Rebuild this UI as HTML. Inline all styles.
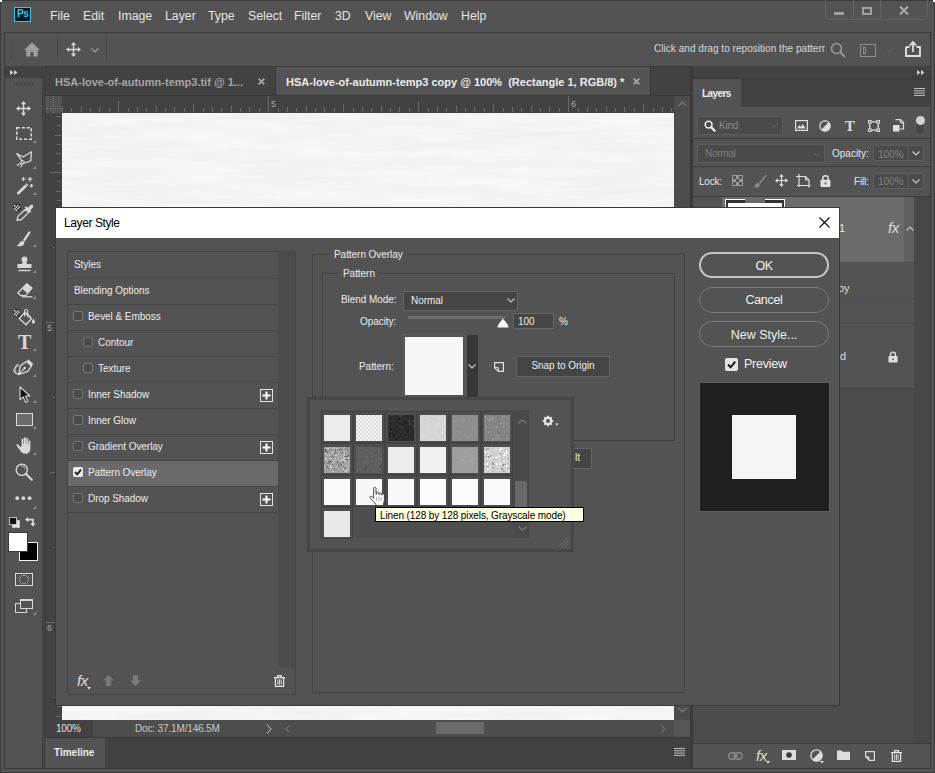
<!DOCTYPE html>
<html lang="en">
<head>
<meta charset="utf-8">
<title>Layer Style</title>
<style>
*{box-sizing:border-box;margin:0;padding:0}
html,body{width:935px;height:773px;overflow:hidden;background:#323232}
body{position:relative;font-family:"Liberation Sans",sans-serif;font-size:12px;color:#dcdcdc}
.a{position:absolute}
.t{position:absolute;white-space:nowrap;line-height:1;font-size:12px}
.b{font-weight:bold}
svg{position:absolute;overflow:visible}
.m{top:10px;font-size:12.3px;color:#e4e4e4}
.d{font-size:10px;color:#ececec;letter-spacing:-0.05px}
.btn{left:699px;width:130px;height:26px;border:1px solid #7a7a7a;border-radius:13px}
</style>
</head>
<body>
<!-- APP FRAME -->
<div class="a" id="frame" style="left:0;top:0;width:935px;height:773px;background:#535353;border:1px solid #3c3c3c;border-radius:3px 3px 0 0"></div>
<div class="a" style="left:0;top:0;width:2px;height:2px;background:#fff"></div>
<div class="a" style="left:933px;top:0;width:2px;height:2px;background:#fff"></div>
<div class="a" id="inner" style="left:4px;top:32px;width:927px;height:737px;background:#535353;border:1px solid #3a3a3a"></div>
<!-- MENU BAR -->
<div class="a" style="left:14px;top:7px;width:17px;height:15px;background:#001d26;border:1px solid #31c5f0"></div>
<div class="t b" style="left:17px;top:9px;font-size:10px;color:#31c5f0;letter-spacing:-0.3px">Ps</div>
<div class="t m" style="left:50px">File</div>
<div class="t m" style="left:83px">Edit</div>
<div class="t m" style="left:118px">Image</div>
<div class="t m" style="left:165px">Layer</div>
<div class="t m" style="left:208px">Type</div>
<div class="t m" style="left:248px">Select</div>
<div class="t m" style="left:294px">Filter</div>
<div class="t m" style="left:335px">3D</div>
<div class="t m" style="left:365px">View</div>
<div class="t m" style="left:404px">Window</div>
<div class="t m" style="left:461px">Help</div>
<!-- window controls -->
<div class="a" style="left:825px;top:-3px;width:103px;height:23px;border:1px solid #636363;border-radius:0 0 4px 4px"></div>
<div class="a" style="left:853px;top:0;width:1px;height:19px;background:#636363"></div>
<div class="a" style="left:880px;top:0;width:1px;height:19px;background:#636363"></div>
<div class="a" style="left:834px;top:12px;width:10px;height:3px;background:#a0a0a0"></div>
<div class="a" style="left:862px;top:7px;width:10px;height:8px;border:2px solid #a0a0a0"></div>
<svg style="left:899px;top:6px" width="10" height="9" viewBox="0 0 10 9"><path d="M1 0.5L9 8.5M9 0.5L1 8.5" stroke="#a8a8a8" stroke-width="2.2" fill="none"/></svg>
<!-- OPTIONS BAR -->
<div class="a" style="left:4px;top:32px;width:927px;height:1px;background:#383838"></div>
<div class="a" style="left:9px;top:40px;width:3px;height:20px;background:repeating-linear-gradient(#484848 0 1px,#535353 1px 2px)"></div>
<svg style="left:24px;top:42px" width="16" height="15" viewBox="0 0 16 15"><path d="M8 0.5L0 8h2.2v6.5h4.3v-4.5h3v4.5h4.3V8H16z" fill="#9d9d9d"/></svg>
<div class="a" style="left:57px;top:37px;width:1px;height:24px;background:#484848"></div>
<svg style="left:66px;top:42px" width="15" height="15" viewBox="0 0 15 15"><path d="M7.5 0l2.6 3.2H8.2v3.6h3.6V4.9L15 7.5l-3.2 2.6V8.2H8.2v3.6h1.9L7.5 15l-2.6-3.2h1.9V8.2H3.2v1.9L0 7.5l3.2-2.6v1.9h3.6V3.2H4.9z" fill="#d6d6d6"/></svg>
<svg style="left:91px;top:48px" width="8" height="5" viewBox="0 0 8 5"><path d="M0.5 0.5L4 4l3.5-3.5" stroke="#a0a0a0" stroke-width="1.2" fill="none"/></svg>
<div class="a" style="left:106px;top:37px;width:1px;height:24px;background:#484848"></div>
<div class="t" style="left:654px;top:44px;font-size:10.1px;color:#d8d8d8;width:171px;overflow:hidden">Click and drag to reposition the pattern</div>
<svg style="left:830px;top:42px" width="16" height="16" viewBox="0 0 16 16"><circle cx="6.5" cy="6.5" r="5" stroke="#9a9a9a" stroke-width="1.5" fill="none"/><path d="M10.2 10.2L15 15" stroke="#9a9a9a" stroke-width="1.8"/></svg>
<div class="a" style="left:860px;top:44px;width:16px;height:13px;border:1px solid #8e8e8e"></div>
<div class="a" style="left:863px;top:47px;width:3px;height:7px;border:1px solid #8e8e8e"></div>
<svg style="left:885px;top:48px" width="8" height="5" viewBox="0 0 8 5"><path d="M0.5 0.5L4 4l3.5-3.5" stroke="#606060" stroke-width="1.2" fill="none"/></svg>
<svg style="left:905px;top:41px" width="16" height="16" viewBox="0 0 16 16"><path d="M1 6h3.5M11.5 6H15v9H1V6" stroke="#e0e0e0" stroke-width="1.8" fill="none"/><path d="M8 11V2M4.8 4.6L8 1l3.2 3.6" stroke="#e0e0e0" stroke-width="1.8" fill="none"/></svg>
<!-- TOOLBAR -->
<div class="a" id="toolbar" style="left:5px;top:66px;width:37px;height:702px;background:#535353"></div>
<div class="a" style="left:5px;top:66px;width:37px;height:12px;background:#424242"></div>
<div class="a" style="left:42px;top:66px;width:3px;height:702px;background:#3a3a3a"></div>
<div class="a" style="left:43px;top:66px;width:1px;height:702px;background:#4a4a4a"></div>
<svg style="left:10px;top:70px" width="8" height="5" viewBox="0 0 8 5"><path d="M0 0l3.5 2.5L0 5zM4 0l3.5 2.5L4 5z" fill="#d0d0d0"/></svg>
<div class="a" style="left:14px;top:82px;width:20px;height:4px;background:repeating-linear-gradient(90deg,#454545 0 1px,#535353 1px 2px)"></div>
<svg style="left:16px;top:101px" width="15" height="15" viewBox="0 0 15 15"><path d="M7.5 0l2.6 3.2H8.2v3.6h3.6V4.9L15 7.5l-3.2 2.6V8.2H8.2v3.6h1.9L7.5 15l-2.6-3.2h1.9V8.2H3.2v1.9L0 7.5l3.2-2.6v1.9h3.6V3.2H4.9z" fill="#d8d8d8"/></svg>
<svg style="left:16px;top:127px" width="16" height="13" viewBox="0 0 16 13"><rect x="0.75" y="0.75" width="14.5" height="11.5" fill="none" stroke="#d8d8d8" stroke-width="1.5" stroke-dasharray="3.2 1.8"/></svg>
<svg style="left:33px;top:140px" width="3" height="3" viewBox="0 0 3 3"><path d="M3 0v3H0z" fill="#9a9a9a"/></svg>
<svg style="left:16px;top:151px" width="17" height="17" viewBox="0 0 17 17"><path d="M0.8 2.6L7 6 15.5 0.8 14.8 9.8 8.6 12 6.2 10.4z" fill="none" stroke="#d8d8d8" stroke-width="1.3" stroke-linejoin="round"/><circle cx="6.6" cy="11.2" r="1.5" fill="#535353" stroke="#d8d8d8" stroke-width="1.1"/><path d="M5.4 12L0.8 14.4M6.8 12.8L4.4 16.2" stroke="#d8d8d8" stroke-width="1.2" fill="none"/></svg>
<svg style="left:33px;top:166px" width="3" height="3" viewBox="0 0 3 3"><path d="M3 0v3H0z" fill="#9a9a9a"/></svg>
<svg style="left:16px;top:177px" width="18" height="18" viewBox="0 0 18 18"><path d="M1.2 15.2L10.6 6.2l1.9 1.9L3.2 17.2c-1.2 1.1-3-0.8-2-2z" fill="#d8d8d8"/><path d="M9.4 7.2l1.9 1.9" stroke="#535353" stroke-width="0.9"/><path d="M7.5 0v4M5.5 2h4M14 0v4.4M11.8 2.2h4.4M15.5 7v3.6M13.7 8.8h3.6" stroke="#d8d8d8" stroke-width="1.2"/></svg>
<svg style="left:33px;top:192px" width="3" height="3" viewBox="0 0 3 3"><path d="M3 0v3H0z" fill="#9a9a9a"/></svg>
<svg style="left:13px;top:203px" width="21" height="18" viewBox="0 0 21 18"><circle cx="4" cy="4.6" r="3.6" fill="#222"/><path d="M1 2h1.5v1.5H1zM4 2h1.5v1.5H4zM2.5 3.500h1.5V5H2.500zM5.500 3.500H7V5H5.500zM1 5h1.500v1.500H1zM4 5h1.500v1.500H4zM2.500 6.500h1.500V8H2.500z" fill="#e8e8e8"/><path d="M1.2 1.6l1-1.200 1 1.200zM5 1.600l1-1.200 1 1.200z" fill="#222"/><path d="M12.800 6.200l3 3L9 16c-1 1-2.600 1.200-3.600 0.800l-1 0.600-0.400-0.600 0.700-0.800c-0.500-1.200-0.200-2.400 0.800-3.400z" fill="none" stroke="#d8d8d8" stroke-width="1.300"/><path d="M11.400 4.200l5.600 5.600 1.400-1.400-1.200-1.200 2.600-2.600c1.600-1.600-0.800-4-2.400-2.400L14.800 4.800 13.600 3.600z" fill="#d8d8d8"/></svg>
<svg style="left:16px;top:231px" width="15" height="16" viewBox="0 0 15 16"><path d="M14 0.300c0.800 0.500 0.300 1.800-0.300 2.800L8.800 10.600 6.800 9.200 12 1.400c0.600-0.900 1.400-1.500 2-1.100z" fill="#d8d8d8"/><path d="M6 10c1.200-0.300 2.600 0.800 2.400 2.200C8.100 14.400 5.400 15.800 0.400 15c1.600-0.600 2.200-1.600 2.800-2.800C3.800 11 4.800 10.300 6 10z" fill="#d8d8d8"/></svg>
<svg style="left:33px;top:244px" width="3" height="3" viewBox="0 0 3 3"><path d="M3 0v3H0z" fill="#9a9a9a"/></svg>
<svg style="left:17px;top:256px" width="15" height="16" viewBox="0 0 15 16"><path d="M7.500 0.500c1.800 0 3 1.300 3 2.900 0 1.300-1 2-1 3.200 0 1 0.600 1.500 1.600 1.500h3.400v4H0.500v-4h3.400c1 0 1.600-0.500 1.600-1.500 0-1.200-1-1.900-1-3.200 0-1.600 1.200-2.900 3-2.900z" fill="#d8d8d8"/><path d="M1.500 14.500h12" stroke="#d8d8d8" stroke-width="1.400"/></svg>
<svg style="left:33px;top:270px" width="3" height="3" viewBox="0 0 3 3"><path d="M3 0v3H0z" fill="#9a9a9a"/></svg>
<svg style="left:17px;top:283px" width="16" height="15" viewBox="0 0 16 15"><path d="M9.800 0.800L15 5 8.600 12.600H3.800L0.800 10z" fill="none" stroke="#d8d8d8" stroke-width="1.300" stroke-linejoin="round"/><path d="M9.800 0.800L15 5 10.600 10.200 5.400 6z" fill="#d8d8d8"/><path d="M5 13.800h10.500" stroke="#d8d8d8" stroke-width="1.300"/></svg>
<svg style="left:33px;top:296px" width="3" height="3" viewBox="0 0 3 3"><path d="M3 0v3H0z" fill="#9a9a9a"/></svg>
<svg style="left:13px;top:308px" width="23" height="18" viewBox="0 0 23 18"><circle cx="4" cy="4.600" r="3.600" fill="#222"/><path d="M1 2h1.500v1.500H1zM4 2h1.500v1.500H4zM2.500 3.500h1.500V5H2.500zM5.500 3.500H7V5H5.500zM1 5h1.500v1.500H1zM4 5h1.500v1.500H4zM2.500 6.500h1.500V8H2.500z" fill="#e8e8e8"/><path d="M1.200 1.600l1-1.200 1 1.200zM5 1.600l1-1.200 1 1.200z" fill="#222"/><path d="M11.500 4.600L18.400 10.800 13 16.800 6.200 10.600z" fill="none" stroke="#d8d8d8" stroke-width="1.300" stroke-linejoin="round"/><path d="M11.600 8.400V3c0-2 3-2 3 0.200v5.600" fill="none" stroke="#d8d8d8" stroke-width="1.200"/><path d="M11.500 4.600c3 0.600 6 3 6.900 6.200" fill="none" stroke="#d8d8d8" stroke-width="1"/><path d="M20.400 10.600c0.800 1.400 1.600 2.400 1.600 3.400a1.600 1.600 0 0 1-3.200 0c0-1 0.800-2 1.600-3.400z" fill="#d8d8d8"/></svg>
<div class="t b" style="left:18px;top:332px;font-size:20px;color:#d8d8d8;font-family:'Liberation Serif',serif">T</div>
<svg style="left:33px;top:348px" width="3" height="3" viewBox="0 0 3 3"><path d="M3 0v3H0z" fill="#9a9a9a"/></svg>
<svg style="left:13px;top:359px" width="21" height="16" viewBox="0 0 21 16"><path d="M13.600 2.400L15.700 0.500 20.300 5 18.400 7.200z" fill="#d8d8d8"/><path d="M5.500 15.600L7.600 6.500 13.600 2.400 18.400 7.200 14.800 12.400z" fill="none" stroke="#d8d8d8" stroke-width="1.300" stroke-linejoin="round"/><circle cx="11.700" cy="9.100" r="1.300" fill="#d8d8d8"/><path d="M11.700 9.100L5.800 15.300" stroke="#d8d8d8" stroke-width="1.100"/><path d="M4.500 6.400C2.500 7.500 1.400 9.500 1.400 11.400 1.600 13.200 3 14.600 4.800 15.200" fill="none" stroke="#d8d8d8" stroke-width="1.100"/><circle cx="4.500" cy="6.400" r="1.200" fill="#535353" stroke="#d8d8d8" stroke-width="1"/><circle cx="1.500" cy="11.400" r="1.200" fill="#535353" stroke="#d8d8d8" stroke-width="1"/></svg>
<svg style="left:33px;top:374px" width="3" height="3" viewBox="0 0 3 3"><path d="M3 0v3H0z" fill="#9a9a9a"/></svg>
<svg style="left:19px;top:386px" width="12" height="17" viewBox="0 0 12 17"><path d="M1 0.800V13.600l3.200-2.800 2.400 5.400 2.200-1-2.400-5.200h4.400z" fill="#111" stroke="#d8d8d8" stroke-width="1.100" stroke-linejoin="round"/></svg>
<svg style="left:33px;top:400px" width="3" height="3" viewBox="0 0 3 3"><path d="M3 0v3H0z" fill="#9a9a9a"/></svg>
<div class="a" style="left:16px;top:413px;width:17px;height:13px;background:#6c6c6c;border:1px solid #d8d8d8"></div>
<svg style="left:33px;top:426px" width="3" height="3" viewBox="0 0 3 3"><path d="M3 0v3H0z" fill="#9a9a9a"/></svg>
<svg style="left:16px;top:437px" width="17" height="17" viewBox="0 0 17 17"><path d="M5.600 8V2.400c0-1.300 1.800-1.300 1.800 0V7h0.500V1.200c0-1.300 1.900-1.300 1.900 0V7h0.500V2c0-1.300 1.800-1.300 1.800 0v5.600h0.500V4.400c0-1.300 1.800-1.300 1.800 0v6.800c0 3.400-2 5.600-5 5.600-2.600 0-3.800-1-5.200-3.200L0.600 8.800C0 7.600 1.400 6.800 2.400 7.800L4.400 10h0.600z" fill="#d8d8d8"/></svg>
<svg style="left:33px;top:452px" width="3" height="3" viewBox="0 0 3 3"><path d="M3 0v3H0z" fill="#9a9a9a"/></svg>
<svg style="left:15px;top:463px" width="18" height="18" viewBox="0 0 18 18"><circle cx="6.800" cy="6.800" r="5.600" fill="none" stroke="#d8d8d8" stroke-width="1.400"/><path d="M10.800 10.800L16.800 16.800" stroke="#d8d8d8" stroke-width="2" stroke-linecap="round"/><path d="M6.200 3.200c1.800-0.200 3.400 1 3.800 2.600" stroke="#d8d8d8" stroke-width="0.900" fill="none"/></svg>
<svg style="left:15px;top:496px" width="17" height="5" viewBox="0 0 17 5"><circle cx="2.200" cy="2.200" r="1.900" fill="#d8d8d8"/><circle cx="8.400" cy="2.200" r="1.900" fill="#d8d8d8"/><circle cx="14.600" cy="2.200" r="1.900" fill="#d8d8d8"/></svg>
<svg style="left:33px;top:506px" width="3" height="3" viewBox="0 0 3 3"><path d="M3 0v3H0z" fill="#9a9a9a"/></svg>
<div class="a" style="left:12px;top:520px;width:8px;height:8px;background:#e6e6e6;border:1px solid #bdbdbd"></div>
<div class="a" style="left:9px;top:517px;width:8px;height:8px;background:#111;border:1px solid #bdbdbd"></div>
<svg style="left:25px;top:517px" width="12" height="10" viewBox="0 0 12 10"><path d="M0 2.600L3.200 0v1.800h5.600v4.400h1.800L8 9.800 5.200 6.200h1.900V3.500H3.200v1.700z" fill="#d8d8d8"/></svg>
<div class="a" style="left:19px;top:542px;width:19px;height:19px;background:#000;border:1px solid #f0f0f0"></div>
<div class="a" style="left:8px;top:532px;width:20px;height:20px;background:#fff;border:1px solid #3a3a3a"></div>
<div class="a" style="left:15px;top:573px;width:18px;height:13px;border:1px solid #d8d8d8"></div>
<div class="a" style="left:19px;top:575px;width:10px;height:9px;border:1.500px dotted #d8d8d8;border-radius:50%"></div>
<div class="a" style="left:15px;top:603px;width:12px;height:10px;border:1px solid #d8d8d8"></div>
<div class="a" style="left:20px;top:599px;width:13px;height:10px;background:#535353;border:1px solid #d8d8d8;border-top-width:2px"></div>
<svg style="left:33px;top:612px" width="3" height="3" viewBox="0 0 3 3"><path d="M3 0v3H0z" fill="#9a9a9a"/></svg>
<!-- DOC WINDOW -->
<div class="a" id="doc" style="left:45px;top:66px;width:645px;height:672px;background:#424242"></div>
<div class="a" style="left:45px;top:66px;width:645px;height:1px;background:#383838"></div>
<div class="a" style="left:45px;top:95px;width:645px;height:1px;background:#383838"></div>
<div class="a" id="tab2" style="left:276px;top:67px;width:374px;height:28px;background:#535353"></div>
<div class="a" style="left:275px;top:67px;width:1px;height:28px;background:#383838"></div>
<div class="a" style="left:650px;top:67px;width:1px;height:28px;background:#383838"></div>
<div class="t b" style="left:55px;top:77px;font-size:11px;color:#a5a5a5">HSA-love-of-autumn-temp3.tif @ 1...</div>
<svg style="left:258px;top:78px" width="7" height="7" viewBox="0 0 7 7"><path d="M0.7 0.7l5.6 5.6M6.3 0.7L0.7 6.3" stroke="#a8a8a8" stroke-width="1.7"/></svg>
<div class="t b" style="left:286px;top:77px;font-size:11px;color:#ececec">HSA-love-of-autumn-temp3 copy @ 100%&nbsp; (Rectangle 1, RGB/8) *</div>
<svg style="left:633px;top:78px" width="7" height="7" viewBox="0 0 7 7"><path d="M0.7 0.7l5.6 5.6M6.3 0.7L0.7 6.3" stroke="#a8a8a8" stroke-width="1.7"/></svg>
<div class="a" style="left:45px;top:96px;width:17px;height:17px;background:#535353"></div>
<div class="a" style="left:53px;top:96px;width:1px;height:17px;background:repeating-linear-gradient(#7a7a7a 0 1px,#535353 1px 2px)"></div>
<div class="a" style="left:47px;top:108px;width:15px;height:1px;background:repeating-linear-gradient(90deg,#7a7a7a 0 1px,#535353 1px 2px)"></div>
<svg style="left:0;top:0" width="935" height="773" viewBox="0 0 935 773"><g stroke="#6a6a6a" stroke-width="1" fill="none"><path d="M62.5 112V107"/><path d="M71.5 112V108"/><path d="M81.5 112V106"/><path d="M90.5 112V108"/><path d="M99.5 112V107"/><path d="M109.5 112V108"/><path d="M118.5 112V101"/><path d="M128.5 112V108"/><path d="M137.5 112V107"/><path d="M146.5 112V108"/><path d="M156.5 112V106"/><path d="M165.5 112V108"/><path d="M174.5 112V107"/><path d="M184.5 112V108"/><path d="M193.5 112V104"/><path d="M203.5 112V108"/><path d="M212.5 112V107"/><path d="M221.5 112V108"/><path d="M231.5 112V106"/><path d="M240.5 112V108"/><path d="M249.5 112V107"/><path d="M259.5 112V108"/><path d="M268.5 112V96"/><path d="M278.5 112V108"/><path d="M287.5 112V107"/><path d="M296.5 112V108"/><path d="M306.5 112V106"/><path d="M315.5 112V108"/><path d="M324.5 112V107"/><path d="M334.5 112V108"/><path d="M343.5 112V104"/><path d="M353.5 112V108"/><path d="M362.5 112V107"/><path d="M371.5 112V108"/><path d="M381.5 112V106"/><path d="M390.5 112V108"/><path d="M399.5 112V107"/><path d="M409.5 112V108"/><path d="M418.5 112V101"/><path d="M428.5 112V108"/><path d="M437.5 112V107"/><path d="M446.5 112V108"/><path d="M456.5 112V106"/><path d="M465.5 112V108"/><path d="M474.5 112V107"/><path d="M484.5 112V108"/><path d="M493.5 112V104"/><path d="M503.5 112V108"/><path d="M512.5 112V107"/><path d="M521.5 112V108"/><path d="M531.5 112V106"/><path d="M540.5 112V108"/><path d="M549.5 112V107"/><path d="M559.5 112V108"/><path d="M568.5 112V96"/><path d="M578.5 112V108"/><path d="M587.5 112V107"/><path d="M596.5 112V108"/><path d="M606.5 112V106"/><path d="M615.5 112V108"/><path d="M624.5 112V107"/><path d="M634.5 112V108"/><path d="M643.5 112V104"/><path d="M653.5 112V108"/><path d="M662.5 112V107"/><path d="M671.5 112V108"/><path d="M61 116.5H56"/><path d="M61 125.5H57"/><path d="M61 135.5H55"/><path d="M61 144.5H57"/><path d="M61 153.5H56"/><path d="M61 163.5H57"/><path d="M61 172.5H50"/><path d="M61 181.5H57"/><path d="M61 191.5H56"/><path d="M61 200.5H57"/><path d="M61 210.5H55"/><path d="M61 219.5H57"/><path d="M61 228.5H56"/><path d="M61 238.5H57"/><path d="M61 247.5H53"/><path d="M61 256.5H57"/><path d="M61 266.5H56"/><path d="M61 275.5H57"/><path d="M61 285.5H55"/><path d="M61 294.5H57"/><path d="M61 303.5H56"/><path d="M61 313.5H57"/><path d="M61 322.5H45"/><path d="M61 331.5H57"/><path d="M61 341.5H56"/><path d="M61 350.5H57"/><path d="M61 360.5H55"/><path d="M61 369.5H57"/><path d="M61 378.5H56"/><path d="M61 388.5H57"/><path d="M61 397.5H53"/><path d="M61 406.5H57"/><path d="M61 416.5H56"/><path d="M61 425.5H57"/><path d="M61 435.5H55"/><path d="M61 444.5H57"/><path d="M61 453.5H56"/><path d="M61 463.5H57"/><path d="M61 472.5H50"/><path d="M61 481.5H57"/><path d="M61 491.5H56"/><path d="M61 500.5H57"/><path d="M61 510.5H55"/><path d="M61 519.5H57"/><path d="M61 528.5H56"/><path d="M61 538.5H57"/><path d="M61 547.5H53"/><path d="M61 556.5H57"/><path d="M61 566.5H56"/><path d="M61 575.5H57"/><path d="M61 585.5H55"/><path d="M61 594.5H57"/><path d="M61 603.5H56"/><path d="M61 613.5H57"/><path d="M61 622.5H45"/><path d="M61 631.5H57"/><path d="M61 641.5H56"/><path d="M61 650.5H57"/><path d="M61 660.5H55"/><path d="M61 669.5H57"/><path d="M61 678.5H56"/><path d="M61 688.5H57"/><path d="M61 697.5H53"/><path d="M61 706.5H57"/><path d="M61 716.5H56"/></g></svg>
<div class="t" style="left:271px;top:100px;font-size:9px;color:#a8a8a8">5</div>
<div class="t" style="left:571px;top:100px;font-size:9px;color:#a8a8a8">6</div>
<div class="t" style="left:47px;top:324px;font-size:9px;color:#a8a8a8">5</div>
<div class="t" style="left:47px;top:624px;font-size:9px;color:#a8a8a8">6</div>
<div class="a" id="canvas" style="left:62px;top:113px;width:612px;height:607px;background:#f7f7f7"></div>
<svg style="left:62px;top:113px" width="612" height="607" viewBox="0 0 612 607"><filter id="lin" x="0" y="0" width="100%" height="100%"><feTurbulence type="fractalNoise" baseFrequency="0.010 0.110" numOctaves="3" seed="7"/><feColorMatrix type="matrix" values="0 0 0 0 0.780  0 0 0 0 0.780  0 0 0 0 0.780  0.900 0 0 0 -0.300"/></filter><rect width="612" height="607" filter="url(#lin)" opacity="0.900"/></svg>
<!-- scrollbars -->
<div class="a" style="left:674px;top:96px;width:16px;height:624px;background:#4d4d4d"></div>
<svg style="left:678px;top:101px" width="9" height="6" viewBox="0 0 9 6"><path d="M0.5 5L4.5 1l4 4" stroke="#7a7a7a" stroke-width="1.2" fill="none"/></svg>
<svg style="left:678px;top:707px" width="9" height="6" viewBox="0 0 9 6"><path d="M0.5 1L4.5 5l4-4" stroke="#7a7a7a" stroke-width="1.2" fill="none"/></svg>
<!-- status bar -->
<div class="a" style="left:45px;top:720px;width:645px;height:17px;background:#4d4d4d"></div>
<div class="a" style="left:45px;top:720px;width:48px;height:17px;background:#424242"></div>
<div class="t" style="left:56px;top:724px;font-size:10px;color:#e0e0e0;letter-spacing:-0.2px">100%</div>
<div class="t" style="left:135px;top:724px;font-size:10px;color:#c8c8c8;letter-spacing:-0.15px">Doc: 37.1M/146.5M</div>
<svg style="left:266px;top:724px" width="6" height="10" viewBox="0 0 6 10"><path d="M1 0.5L5 5 1 9.5" stroke="#b0b0b0" stroke-width="1.1" fill="none"/></svg>
<div class="a" style="left:277px;top:720px;width:397px;height:17px;background:#4d4d4d"></div>
<svg style="left:285px;top:725px" width="5" height="8" viewBox="0 0 5 8"><path d="M4.5 0.5L1 4l3.5 3.5" stroke="#707070" stroke-width="1.1" fill="none"/></svg>
<div class="a" style="left:436px;top:722px;width:48px;height:12px;background:#6b6b6b"></div>
<svg style="left:661px;top:725px" width="5" height="8" viewBox="0 0 5 8"><path d="M0.5 0.5L4 4 0.5 7.5" stroke="#707070" stroke-width="1.1" fill="none"/></svg>
<div class="a" style="left:674px;top:720px;width:16px;height:17px;background:#555"></div>
<div class="a" style="left:45px;top:737px;width:645px;height:1px;background:#383838"></div>
<div class="a" style="left:690px;top:66px;width:3px;height:702px;background:#3a3a3a"></div>
<!-- TIMELINE -->
<div class="a" id="timeline" style="left:45px;top:738px;width:645px;height:30px;background:#424242"></div>
<div class="a" style="left:45px;top:738px;width:60px;height:30px;background:#535353"></div>
<div class="t b" style="left:54px;top:748px;font-size:10px;color:#ececec">Timeline</div>
<svg style="left:674px;top:748px" width="11" height="8" viewBox="0 0 11 8"><path d="M0 0.5h11M0 2.8h11M0 5.1h11M0 7.4h11" stroke="#c0c0c0" stroke-width="1"/></svg>
<!-- RIGHT PANEL -->

<div class="a" id="rpanel" style="left:693px;top:66px;width:237px;height:702px;background:#4b4b4b"></div>
<div class="a" style="left:693px;top:66px;width:237px;height:12px;background:#424242"></div>
<svg style="left:917px;top:70px" width="8" height="5" viewBox="0 0 8 5"><path d="M0 0l3.5 2.5L0 5zM4 0l3.5 2.5L4 5z" fill="#d0d0d0"/></svg>
<div class="a" style="left:693px;top:78px;width:237px;height:1px;background:#383838"></div>
<div class="a" style="left:693px;top:79px;width:237px;height:28px;background:#424242"></div>
<div class="a" style="left:693px;top:79px;width:48px;height:28px;background:#535353"></div>
<div class="a" style="left:693px;top:107px;width:237px;height:90px;background:#535353"></div>
<div class="t b" style="left:702px;top:88.500px;font-size:10px;color:#ececec;letter-spacing:-0.6px">Layers</div>
<svg style="left:914px;top:88px" width="11" height="8" viewBox="0 0 11 8"><path d="M0 0.5h11M0 2.8h11M0 5.1h11M0 7.4h11" stroke="#c0c0c0" stroke-width="1"/></svg>
<!-- kind row -->
<div class="a" style="left:697px;top:116px;width:86px;height:19px;background:#4a4a4a;border:1px solid #5c5c5c;border-radius:2px"></div>
<svg style="left:704px;top:120px" width="12" height="12" viewBox="0 0 12 12"><circle cx="4.6" cy="4.6" r="3.4" stroke="#f0f0f0" stroke-width="1.6" fill="none"/><path d="M7.2 7.2L10.6 10.6" stroke="#f0f0f0" stroke-width="2.2" stroke-linecap="round"/></svg>
<div class="t" style="left:719px;top:121px;font-size:10px;color:#8a8a8a;letter-spacing:-0.25px">Kind</div>
<svg style="left:770px;top:123px" width="8" height="5" viewBox="0 0 8 5"><path d="M0.5 0.5L4 4l3.5-3.5" stroke="#5e5e5e" stroke-width="1.1" fill="none"/></svg>
<svg style="left:795px;top:120px" width="13" height="11" viewBox="0 0 13 11"><rect x="0.6" y="0.6" width="11.8" height="9.8" fill="none" stroke="#e0e0e0" stroke-width="1.2"/><path d="M2 8.5l2.3-3.6 1.6 2.2 1.7-3 3.1 4.4z" fill="#e0e0e0"/></svg>
<svg style="left:819px;top:120px" width="12" height="12" viewBox="0 0 12 12"><circle cx="6" cy="6" r="5.2" fill="none" stroke="#e0e0e0" stroke-width="1.2"/><path d="M9.7 2.3A5.2 5.2 0 0 1 2.3 9.7z" fill="#e0e0e0"/></svg>
<div class="t b" style="left:845px;top:119px;font-size:14.5px;color:#e0e0e0;font-family:'Liberation Serif',serif">T</div>
<svg style="left:868px;top:120px" width="12" height="12" viewBox="0 0 12 12"><rect x="1.800" y="1.800" width="8.400" height="8.400" fill="none" stroke="#e0e0e0" stroke-width="1.300"/><g fill="#535353" stroke="#e0e0e0" stroke-width="1"><rect x="0.500" y="0.500" width="2.600" height="2.600"/><rect x="8.900" y="0.500" width="2.600" height="2.600"/><rect x="0.500" y="8.900" width="2.600" height="2.600"/><rect x="8.900" y="8.900" width="2.600" height="2.600"/></g></svg>
<svg style="left:893px;top:119px" width="11" height="13" viewBox="0 0 11 13"><path d="M2.5 0.6h5l3 3V10H7" fill="none" stroke="#e0e0e0" stroke-width="1.2"/><path d="M7.3 0.6v3.2h3.2" fill="none" stroke="#e0e0e0" stroke-width="1"/><rect x="0" y="6" width="6.5" height="6.5" fill="#e0e0e0"/></svg>
<div class="a" style="left:915px;top:116px;width:10px;height:19px;background:#464646;border:1px solid #5e5e5e;border-radius:5px"></div>
<div class="a" style="left:915.500px;top:116px;width:9px;height:9px;background:#d2d2d2;border-radius:50%"></div>
<div class="a" style="left:693px;top:138px;width:237px;height:1px;background:#3c3c3c"></div>
<!-- blend row -->
<div class="a" style="left:697px;top:144px;width:128px;height:19px;background:#4a4a4a;border:1px solid #5c5c5c;border-radius:2px"></div>
<div class="t" style="left:705px;top:149px;font-size:10px;color:#7e7e7e;letter-spacing:-0.25px">Normal</div>
<svg style="left:813px;top:152px" width="8" height="5" viewBox="0 0 8 5"><path d="M0.5 0.5L4 4l3.5-3.5" stroke="#5e5e5e" stroke-width="1.1" fill="none"/></svg>
<div class="t" style="left:832px;top:149px;font-size:10px;color:#e6e6e6">Opacity:</div>
<div class="a" style="left:873px;top:145px;width:51px;height:16px;background:#4a4a4a;border:1px solid #5e5e5e;border-radius:2px"></div>
<div class="a" style="left:908px;top:146px;width:1px;height:14px;background:#5e5e5e"></div>
<div class="t" style="left:878px;top:149.500px;font-size:10px;color:#808080">100%</div>
<svg style="left:912px;top:151px" width="8" height="5" viewBox="0 0 8 5"><path d="M0.5 0.5L4 4l3.5-3.5" stroke="#d0d0d0" stroke-width="1.1" fill="none"/></svg>
<div class="a" style="left:693px;top:166px;width:237px;height:1px;background:#3c3c3c"></div>
<!-- lock row -->
<div class="t" style="left:699px;top:177px;font-size:10px;color:#e6e6e6;letter-spacing:-0.2px">Lock:</div>
<div class="a" style="left:732px;top:175px;width:11px;height:11px;border:1px solid #9a9a9a;background:conic-gradient(#9a9a9a 25%,#535353 0 50%,#9a9a9a 0 75%,#535353 0) 0 0/6px 6px"></div>
<svg style="left:753px;top:174px" width="14" height="14" viewBox="0 0 14 14"><path d="M13 0.5L6 8.5l1.2 1.2L13.6 1.5z" fill="#8c8c8c"/><path d="M5.5 9C3.5 8.8 2.6 10.2 2.4 11.3 2.2 12.5 1.2 13 0.5 13c2 1 5 0.7 6-1.2 0.5-1-0.2-2.4-1-2.8z" fill="#8c8c8c"/></svg>
<svg style="left:775px;top:174px" width="13" height="13" viewBox="0 0 15 15"><path d="M7.5 0l2.6 3.2H8.2v3.6h3.6V4.9L15 7.5l-3.2 2.6V8.2H8.2v3.6h1.9L7.5 15l-2.6-3.2h1.9V8.2H3.2v1.9L0 7.5l3.2-2.6v1.9h3.6V3.2H4.9z" fill="#e0e0e0"/></svg>
<svg style="left:796px;top:174px" width="15" height="14" viewBox="0 0 15 14"><path d="M3 0v13M0 2.5h9.5L13 6v5.5H1M13 9v4.5M10 11.5h4.5" fill="none" stroke="#e0e0e0" stroke-width="1.2"/><path d="M9.5 2.5V6H13" fill="none" stroke="#e0e0e0" stroke-width="1"/></svg>
<svg style="left:820px;top:175px" width="11" height="12" viewBox="0 0 11 12"><path d="M2.8 5V3.4a2.7 2.7 0 0 1 5.4 0V5" fill="none" stroke="#e0e0e0" stroke-width="1.5"/><rect x="0.5" y="4.8" width="10" height="7.2" rx="0.8" fill="#e0e0e0"/><rect x="4.7" y="7.4" width="1.6" height="2" fill="#535353"/></svg>
<div class="t" style="left:854px;top:177px;font-size:10px;color:#e6e6e6;letter-spacing:-0.2px">Fill:</div>
<div class="a" style="left:873px;top:173px;width:51px;height:16px;background:#4a4a4a;border:1px solid #5e5e5e;border-radius:2px"></div>
<div class="a" style="left:908px;top:174px;width:1px;height:14px;background:#5e5e5e"></div>
<div class="t" style="left:878px;top:177px;font-size:10px;color:#808080">100%</div>
<svg style="left:912px;top:179px" width="8" height="5" viewBox="0 0 8 5"><path d="M0.5 0.5L4 4l3.5-3.5" stroke="#d0d0d0" stroke-width="1.1" fill="none"/></svg>
<div class="a" style="left:693px;top:196px;width:237px;height:1px;background:#3c3c3c"></div>
<!-- layer rows -->
<div class="a" style="left:693px;top:197px;width:221px;height:191px;background:#535353"></div>
<div class="a" style="left:914px;top:197px;width:16px;height:546px;background:#474747"></div>
<div class="a" style="left:722px;top:197px;width:182px;height:65px;background:#6b6b6b"></div>
<div class="a" style="left:904px;top:197px;width:10px;height:65px;background:#5f5f5f"></div>
<div class="a" style="left:725px;top:199px;width:20px;height:9px;border-left:1px solid #fff;border-top:1px solid #fff;background:#333"></div>
<div class="a" style="left:765px;top:199px;width:20px;height:9px;border-right:1px solid #fff;border-top:1px solid #fff;background:#333"></div>
<div class="a" style="left:728px;top:203px;width:54px;height:6px;background:#fff"></div>
<div class="a" style="left:745px;top:199px;width:20px;height:4px;background:#6b6b6b"></div>
<div class="t" style="left:839px;top:223px;font-size:11px;color:#e6e6e6">1</div>
<div class="t" style="left:888px;top:220px;font-size:15px;color:#dcdcdc;font-style:italic;letter-spacing:-0.5px">fx</div>
<svg style="left:906px;top:226px" width="8" height="5" viewBox="0 0 8 5"><path d="M0.5 4.5L4 1l3.5 3.5" stroke="#c4c4c4" stroke-width="1.1" fill="none"/></svg>
<div class="a" style="left:693px;top:262px;width:221px;height:1px;background:#4a4a4a"></div>
<div class="t" style="left:838px;top:283px;font-size:11px;color:#dcdcdc">py</div>
<div class="a" style="left:693px;top:298px;width:221px;height:1px;background:#4a4a4a"></div>
<div class="a" style="left:693px;top:323px;width:221px;height:1px;background:#4a4a4a"></div>
<div class="t" style="left:840px;top:351px;font-size:11px;color:#dcdcdc">d</div>
<svg style="left:888px;top:351px" width="10" height="12" viewBox="0 0 11 12"><path d="M2.8 5V3.4a2.7 2.7 0 0 1 5.4 0V5" fill="none" stroke="#e0e0e0" stroke-width="1.5"/><rect x="0.5" y="4.8" width="10" height="7.2" rx="0.8" fill="#e0e0e0"/><rect x="4.7" y="7.4" width="1.6" height="2" fill="#535353"/></svg>
<div class="a" style="left:693px;top:388px;width:221px;height:1px;background:#454545"></div>
<!-- panel bottom bar -->
<div class="a" style="left:693px;top:743px;width:237px;height:1px;background:#3c3c3c"></div>
<div class="a" style="left:693px;top:744px;width:237px;height:24px;background:#535353"></div>
<svg style="left:728px;top:752px" width="15" height="8" viewBox="0 0 15 8"><rect x="0.700" y="0.700" width="7.600" height="6.600" rx="3.300" fill="none" stroke="#8a8a8a" stroke-width="1.400"/><rect x="6.700" y="0.700" width="7.600" height="6.600" rx="3.300" fill="none" stroke="#8a8a8a" stroke-width="1.400"/><path d="M4.500 4h6" stroke="#8a8a8a" stroke-width="1.400"/></svg>
<div class="t" style="left:756px;top:748px;font-size:15px;color:#dcdcdc;font-style:italic;letter-spacing:-0.5px">fx</div>
<svg style="left:766px;top:761px" width="4" height="3" viewBox="0 0 4 3"><path d="M0 0h4L2 2.500z" fill="#e8e8e8"/></svg>
<svg style="left:782px;top:750px" width="14" height="10" viewBox="0 0 14 10"><rect width="14" height="10" fill="#dcdcdc"/><circle cx="7" cy="5" r="2.800" fill="#3a3a3a"/></svg>
<svg style="left:810px;top:749px" width="13" height="13" viewBox="0 0 12 12"><circle cx="6" cy="6" r="5.200" fill="none" stroke="#dcdcdc" stroke-width="1.200"/><path d="M9.700 2.300A5.200 5.200 0 0 1 2.300 9.700z" fill="#dcdcdc"/></svg>
<svg style="left:820px;top:761px" width="4" height="3" viewBox="0 0 4 3"><path d="M0 0h4L2 2.500z" fill="#e8e8e8"/></svg>
<svg style="left:837px;top:750px" width="13" height="10" viewBox="0 0 13 10"><path d="M0 0.500h4.600l1 1.300H13V10H0z" fill="#dcdcdc"/></svg>
<svg style="left:865px;top:751px" width="10" height="10" viewBox="0 0 10 10"><path d="M0.600 0.600h8.800v8.800H4.400L0.600 5.800z" fill="none" stroke="#dcdcdc" stroke-width="1.200"/><path d="M0.800 5.600h3.600v3.600z" fill="#dcdcdc"/></svg>
<svg style="left:891px;top:750px" width="11" height="12" viewBox="0 0 11 12"><path d="M0 2.600h11M3.600 2.400V0.600h3.800v1.800M1.400 2.800v8.600h8.200V2.800" fill="none" stroke="#e6e6e6" stroke-width="1.200"/><path d="M3.800 4.400v5.400M5.500 4.400v5.400M7.200 4.400v5.400" stroke="#e6e6e6" stroke-width="0.900"/></svg>

<!-- DIALOG -->
<div class="a" id="dialog" style="left:55px;top:207px;width:785px;height:499px;background:#535353;border:1px solid #383838"></div>
<div class="a" id="dtitle" style="left:56px;top:208px;width:783px;height:30px;background:#fff"></div>
<div class="t" style="left:64px;top:217px;font-size:12px;color:#000;letter-spacing:-0.4px">Layer Style</div>
<svg style="left:819px;top:217px" width="11" height="11" viewBox="0 0 11 11"><path d="M0.5 0.5l10 10M10.5 0.5l-10 10" stroke="#000" stroke-width="1.1"/></svg>
<!-- list -->
<div class="a" style="left:67px;top:251px;width:229px;height:444px;border:1px solid #434343"></div>
<div class="a" style="left:278px;top:252px;width:17px;height:415px;background:#4b4b4b"></div>
<div class="a" style="left:68px;top:253px;width:210px;height:25px;background:#535353"></div>
<div class="a" style="left:68px;top:278px;width:210px;height:1px;background:#454545"></div>
<div class="t d" style="left:74px;top:260px">Styles</div>
<div class="a" style="left:68px;top:279px;width:210px;height:25px;background:#535353"></div>
<div class="a" style="left:68px;top:304px;width:210px;height:1px;background:#454545"></div>
<div class="t d" style="left:74px;top:286px">Blending Options</div>
<div class="a" style="left:68px;top:305px;width:210px;height:25px;background:#535353"></div>
<div class="a" style="left:68px;top:330px;width:210px;height:1px;background:#454545"></div>
<div class="a" style="left:73px;top:311px;width:10px;height:10px;background:#4a4a4a;border:1px solid #767676;border-radius:2px"></div>
<div class="t d" style="left:88px;top:312px">Bevel &amp; Emboss</div>
<div class="a" style="left:68px;top:331px;width:210px;height:25px;background:#535353"></div>
<div class="a" style="left:68px;top:356px;width:210px;height:1px;background:#454545"></div>
<div class="a" style="left:83px;top:337px;width:10px;height:10px;background:#4a4a4a;border:1px solid #767676;border-radius:2px"></div>
<div class="t d" style="left:98px;top:338px">Contour</div>
<div class="a" style="left:68px;top:357px;width:210px;height:25px;background:#535353"></div>
<div class="a" style="left:68px;top:382px;width:210px;height:1px;background:#454545"></div>
<div class="a" style="left:83px;top:363px;width:10px;height:10px;background:#4a4a4a;border:1px solid #767676;border-radius:2px"></div>
<div class="t d" style="left:98px;top:364px">Texture</div>
<div class="a" style="left:68px;top:383px;width:210px;height:25px;background:#535353"></div>
<div class="a" style="left:68px;top:408px;width:210px;height:1px;background:#454545"></div>
<div class="a" style="left:73px;top:389px;width:10px;height:10px;background:#4a4a4a;border:1px solid #767676;border-radius:2px"></div>
<div class="t d" style="left:88px;top:390px">Inner Shadow</div>
<div class="a" style="left:260px;top:389px;width:13px;height:13px;border:1px solid #e0e0e0"></div>
<div class="a" style="left:263px;top:395px;width:7px;height:1px;background:#fff;box-shadow:0 0 0 0.5px #fff"></div>
<div class="a" style="left:266px;top:392px;width:1px;height:7px;background:#fff;box-shadow:0 0 0 0.5px #fff"></div>
<div class="a" style="left:68px;top:409px;width:210px;height:25px;background:#535353"></div>
<div class="a" style="left:68px;top:434px;width:210px;height:1px;background:#454545"></div>
<div class="a" style="left:73px;top:415px;width:10px;height:10px;background:#4a4a4a;border:1px solid #767676;border-radius:2px"></div>
<div class="t d" style="left:88px;top:416px">Inner Glow</div>
<div class="a" style="left:68px;top:435px;width:210px;height:25px;background:#535353"></div>
<div class="a" style="left:68px;top:460px;width:210px;height:1px;background:#454545"></div>
<div class="a" style="left:73px;top:441px;width:10px;height:10px;background:#4a4a4a;border:1px solid #767676;border-radius:2px"></div>
<div class="t d" style="left:88px;top:442px">Gradient Overlay</div>
<div class="a" style="left:260px;top:441px;width:13px;height:13px;border:1px solid #e0e0e0"></div>
<div class="a" style="left:263px;top:447px;width:7px;height:1px;background:#fff;box-shadow:0 0 0 0.5px #fff"></div>
<div class="a" style="left:266px;top:444px;width:1px;height:7px;background:#fff;box-shadow:0 0 0 0.5px #fff"></div>
<div class="a" style="left:68px;top:461px;width:210px;height:25px;background:#6a6a6a"></div>
<div class="a" style="left:68px;top:486px;width:210px;height:1px;background:#454545"></div>
<div class="a" style="left:73px;top:467px;width:10px;height:10px;background:#e8e8e8;border-radius:2px"></div>
<svg style="left:73px;top:467px" width="10" height="10" viewBox="0 0 10 10"><path d="M2 5l2.2 2.4L8 2.6" stroke="#1a1a1a" stroke-width="1.8" fill="none"/></svg>
<div class="t d" style="left:88px;top:468px">Pattern Overlay</div>
<div class="a" style="left:68px;top:487px;width:210px;height:25px;background:#535353"></div>
<div class="a" style="left:68px;top:512px;width:210px;height:1px;background:#454545"></div>
<div class="a" style="left:73px;top:493px;width:10px;height:10px;background:#4a4a4a;border:1px solid #767676;border-radius:2px"></div>
<div class="t d" style="left:88px;top:494px">Drop Shadow</div>
<div class="a" style="left:260px;top:493px;width:13px;height:13px;border:1px solid #e0e0e0"></div>
<div class="a" style="left:263px;top:499px;width:7px;height:1px;background:#fff;box-shadow:0 0 0 0.5px #fff"></div>
<div class="a" style="left:266px;top:496px;width:1px;height:7px;background:#fff;box-shadow:0 0 0 0.5px #fff"></div>
<div class="t" style="left:77px;top:673px;font-size:15px;color:#dcdcdc;font-style:italic;letter-spacing:-0.5px">fx</div>
<svg style="left:87px;top:687px" width="4" height="3" viewBox="0 0 4 3"><path d="M0 0h4L2 2.5z" fill="#e8e8e8"/></svg>
<svg style="left:103px;top:675px" width="11" height="11" viewBox="0 0 11 11"><path d="M5.5 0L11 5.5H8V11H3V5.5H0z" fill="#7a7a7a"/></svg>
<svg style="left:130px;top:675px" width="11" height="11" viewBox="0 0 11 11"><path d="M5.5 11L11 5.5H8V0H3v5.5H0z" fill="#7a7a7a"/></svg>
<svg style="left:274px;top:675px" width="11" height="12" viewBox="0 0 11 12"><path d="M0 2.6h11M3.6 2.4V0.6h3.8v1.8M1.4 2.8v8.6h8.2V2.8" fill="none" stroke="#e6e6e6" stroke-width="1.2"/><path d="M3.8 4.4v5.4M5.5 4.4v5.4M7.2 4.4v5.4" stroke="#e6e6e6" stroke-width="0.9"/></svg>
<!-- fieldsets -->
<div class="a" style="left:312px;top:254px;width:373px;height:439px;border:1px solid #404040;box-shadow:inset 1px 1px 0 #585858"></div>
<div class="a" style="left:322px;top:273px;width:353px;height:168px;border:1px solid #404040;box-shadow:inset 1px 1px 0 #585858"></div>
<div class="t d" style="left:330px;top:250px;background:#535353;padding:0 4px">Pattern Overlay</div>
<div class="t d" style="left:339px;top:269px;background:#535353;padding:0 4px">Pattern</div>
<div class="t d" style="left:341px;top:295px">Blend Mode:</div>
<div class="a" style="left:403px;top:291px;width:115px;height:20px;background:#454545;border:1px solid #666"></div>
<div class="t d" style="left:411px;top:296px">Normal</div>
<svg style="left:507px;top:298px" width="8" height="5" viewBox="0 0 8 5"><path d="M0.5 0.5L4 4l3.5-3.5" stroke="#c8c8c8" stroke-width="1.1" fill="none"/></svg>
<div class="t d" style="left:360px;top:317px">Opacity:</div>
<div class="a" style="left:408px;top:316px;width:97px;height:3px;background:#6e6e6e"></div>
<svg style="left:497px;top:318px" width="12" height="10" viewBox="0 0 12 10"><path d="M6 0.5C7.5 3 11.5 6 11.5 9.5H0.5C0.5 6 4.5 3 6 0.5z" fill="#fff"/></svg>
<div class="a" style="left:513px;top:313px;width:41px;height:16px;background:#454545;border:1px solid #666"></div>
<div class="t d" style="left:518px;top:317px">100</div>
<div class="t d" style="left:559px;top:317px">%</div>
<div class="t d" style="left:359px;top:362px">Pattern:</div>
<div class="a" style="left:403px;top:334px;width:63px;height:64px;border:1px solid #5e5e5e"></div>
<div class="a" style="left:405px;top:337px;width:58px;height:58px;background:#f7f7f7"></div>
<div class="a" style="left:467px;top:335px;width:11px;height:63px;background:#373737"></div>
<svg style="left:468px;top:364px" width="8" height="5" viewBox="0 0 8 5"><path d="M0.5 0.5L4 4l3.5-3.5" stroke="#c8c8c8" stroke-width="1.1" fill="none"/></svg>
<svg style="left:494px;top:362px" width="10" height="10" viewBox="0 0 10 10"><path d="M0.6 0.6h8.8v8.8H4.4L0.6 5.8z" fill="none" stroke="#e0e0e0" stroke-width="1.2"/><path d="M0.8 5.6h3.6v3.6" fill="none" stroke="#e0e0e0" stroke-width="1"/></svg>
<div class="a" style="left:516px;top:356px;width:94px;height:21px;background:#454545;border:1px solid #646464"></div>
<div class="t d" style="left:516px;top:361px;width:94px;text-align:center">Snap to Origin</div>
<div class="a" style="left:480px;top:448px;width:112px;height:21px;background:#454545;border:1px solid #646464"></div>
<div class="t d" style="left:575px;top:453px">lt</div>
<!-- buttons -->
<div class="a btn" style="top:252px;border:2px solid #c6c6c6"></div>
<div class="t" style="left:699px;top:260px;width:130px;text-align:center;font-size:12.5px;color:#f0f0f0;letter-spacing:-0.5px">OK</div>
<div class="a btn" style="top:287px"></div>
<div class="t" style="left:699px;top:294px;width:130px;text-align:center;font-size:12.5px;color:#f0f0f0;letter-spacing:-0.3px">Cancel</div>
<div class="a btn" style="top:321px"></div>
<div class="t" style="left:699px;top:329px;width:130px;text-align:center;font-size:12.5px;color:#f0f0f0">New Style...</div>
<div class="a" style="left:725px;top:358px;width:13px;height:13px;background:#e4e4e4;border-radius:2px"></div>
<svg style="left:725px;top:358px" width="13" height="13" viewBox="0 0 13 13"><path d="M3 6.5l2.6 2.8L10.2 3.6" stroke="#1a1a1a" stroke-width="2" fill="none"/></svg>
<div class="t" style="left:744px;top:358px;font-size:12.5px;color:#f0f0f0;letter-spacing:-0.25px">Preview</div>
<div class="a" style="left:699px;top:382px;width:131px;height:130px;background:#202020;border:1px solid #5c5c5c"></div>
<div class="a" style="left:732px;top:415px;width:64px;height:64px;background:#f5f5f5"></div>
<!-- POPUP -->
<div class="a" style="left:307px;top:397px;width:267px;height:155px;background:#535353;border:3px solid #474747"></div>
<div class="a" style="left:320px;top:410px;width:209px;height:128px;background:#494949"></div>
<div class="a" style="left:320px;top:410px;width:193px;height:128px;background:#4e4e4e"></div>
<div class="a" style="left:321px;top:411px;width:32px;height:32px;border:1px solid #434343"></div>
<div class="a" style="left:324px;top:415px;width:26px;height:26px;background:#ececec"></div>
<div class="a" style="left:353px;top:411px;width:32px;height:32px;border:1px solid #434343"></div>
<div class="a" style="left:356px;top:415px;width:26px;height:26px;background:conic-gradient(#dcdcdc 25%,#f6f6f6 0 50%,#dcdcdc 0 75%,#f6f6f6 0) 0 0/4px 4px"></div>
<div class="a" style="left:385px;top:411px;width:32px;height:32px;border:1px solid #434343"></div>
<div class="a" style="left:388px;top:415px;width:26px;height:26px;background:#2b2b2b"></div>
<div class="a" style="left:417px;top:411px;width:32px;height:32px;border:1px solid #434343"></div>
<div class="a" style="left:420px;top:415px;width:26px;height:26px;background:#d6d6d6"></div>
<div class="a" style="left:449px;top:411px;width:32px;height:32px;border:1px solid #434343"></div>
<div class="a" style="left:452px;top:415px;width:26px;height:26px;background:#8e8e8e"></div>
<div class="a" style="left:481px;top:411px;width:32px;height:32px;border:1px solid #434343"></div>
<div class="a" style="left:484px;top:415px;width:26px;height:26px;background:#868686"></div>
<div class="a" style="left:321px;top:443px;width:32px;height:32px;border:1px solid #434343"></div>
<div class="a" style="left:324px;top:447px;width:26px;height:26px;background:#a2a2a2"></div>
<div class="a" style="left:353px;top:443px;width:32px;height:32px;border:1px solid #434343"></div>
<div class="a" style="left:356px;top:447px;width:26px;height:26px;background:#5e5e5e"></div>
<div class="a" style="left:385px;top:443px;width:32px;height:32px;border:1px solid #434343"></div>
<div class="a" style="left:388px;top:447px;width:26px;height:26px;background:#ececec"></div>
<div class="a" style="left:417px;top:443px;width:32px;height:32px;border:1px solid #434343"></div>
<div class="a" style="left:420px;top:447px;width:26px;height:26px;background:#f1f1f1"></div>
<div class="a" style="left:449px;top:443px;width:32px;height:32px;border:1px solid #434343"></div>
<div class="a" style="left:452px;top:447px;width:26px;height:26px;background:#9e9e9e"></div>
<div class="a" style="left:481px;top:443px;width:32px;height:32px;border:1px solid #434343"></div>
<div class="a" style="left:484px;top:447px;width:26px;height:26px;background:#cfcfcf"></div>
<div class="a" style="left:321px;top:475px;width:32px;height:32px;border:1px solid #434343"></div>
<div class="a" style="left:324px;top:479px;width:26px;height:26px;background:#f9f9f9"></div>
<div class="a" style="left:353px;top:475px;width:32px;height:32px;border:1px solid #434343"></div>
<div class="a" style="left:356px;top:479px;width:26px;height:26px;background:#f7f7f7"></div>
<div class="a" style="left:385px;top:475px;width:32px;height:32px;border:1px solid #434343"></div>
<div class="a" style="left:388px;top:479px;width:26px;height:26px;background:#f8f8f8"></div>
<div class="a" style="left:417px;top:475px;width:32px;height:32px;border:1px solid #434343"></div>
<div class="a" style="left:420px;top:479px;width:26px;height:26px;background:#fbfbfb"></div>
<div class="a" style="left:449px;top:475px;width:32px;height:32px;border:1px solid #434343"></div>
<div class="a" style="left:452px;top:479px;width:26px;height:26px;background:#fafafa"></div>
<div class="a" style="left:481px;top:475px;width:32px;height:32px;border:1px solid #434343"></div>
<div class="a" style="left:484px;top:479px;width:26px;height:26px;background:#f9f9f9"></div>
<div class="a" style="left:321px;top:507px;width:32px;height:32px;border:1px solid #434343"></div>
<div class="a" style="left:324px;top:511px;width:26px;height:26px;background:#e9e9e9"></div>
<svg style="left:0;top:0" width="935" height="773" viewBox="0 0 935 773"><rect x="392" y="433" width="1" height="1" fill="#1c1c1c"/><rect x="403" y="439" width="1" height="1" fill="#232323"/><rect x="394" y="418" width="1" height="1" fill="#232323"/><rect x="401" y="434" width="1" height="2" fill="#232323"/><rect x="396" y="438" width="1" height="2" fill="#1c1c1c"/><rect x="398" y="415" width="1" height="1" fill="#1c1c1c"/><rect x="400" y="436" width="1" height="1" fill="#1c1c1c"/><rect x="404" y="422" width="1" height="1" fill="#3a3a3a"/><rect x="399" y="422" width="2" height="1" fill="#232323"/><rect x="397" y="415" width="1" height="2" fill="#1c1c1c"/><rect x="393" y="435" width="2" height="1" fill="#1c1c1c"/><rect x="411" y="425" width="2" height="2" fill="#232323"/><rect x="404" y="436" width="1" height="1" fill="#444"/><rect x="406" y="430" width="2" height="1" fill="#1c1c1c"/><rect x="403" y="422" width="2" height="1" fill="#232323"/><rect x="409" y="420" width="1" height="2" fill="#444"/><rect x="390" y="429" width="2" height="2" fill="#1c1c1c"/><rect x="412" y="420" width="2" height="1" fill="#444"/><rect x="403" y="438" width="1" height="1" fill="#1c1c1c"/><rect x="397" y="437" width="2" height="2" fill="#232323"/><rect x="408" y="420" width="1" height="2" fill="#3a3a3a"/><rect x="388" y="439" width="1" height="2" fill="#3a3a3a"/><rect x="400" y="431" width="1" height="2" fill="#444"/><rect x="402" y="423" width="2" height="2" fill="#1c1c1c"/><rect x="400" y="438" width="2" height="1" fill="#3a3a3a"/><rect x="401" y="416" width="1" height="1" fill="#3a3a3a"/><rect x="404" y="428" width="1" height="1" fill="#232323"/><rect x="399" y="415" width="2" height="2" fill="#444"/><rect x="402" y="434" width="1" height="1" fill="#3a3a3a"/><rect x="405" y="433" width="1" height="1" fill="#444"/><rect x="389" y="436" width="1" height="1" fill="#1c1c1c"/><rect x="402" y="415" width="1" height="1" fill="#444"/><rect x="391" y="434" width="1" height="1" fill="#444"/><rect x="390" y="420" width="1" height="1" fill="#3a3a3a"/><rect x="409" y="423" width="2" height="2" fill="#444"/><rect x="402" y="437" width="1" height="1" fill="#232323"/><rect x="391" y="415" width="1" height="1" fill="#444"/><rect x="401" y="421" width="1" height="1" fill="#444"/><rect x="411" y="431" width="1" height="2" fill="#232323"/><rect x="388" y="422" width="1" height="1" fill="#3a3a3a"/><rect x="389" y="438" width="1" height="1" fill="#232323"/><rect x="405" y="422" width="2" height="2" fill="#232323"/><rect x="395" y="431" width="2" height="1" fill="#232323"/><rect x="409" y="433" width="1" height="2" fill="#232323"/><rect x="389" y="438" width="1" height="1" fill="#3a3a3a"/><rect x="389" y="424" width="1" height="1" fill="#444"/><rect x="397" y="438" width="1" height="1" fill="#444"/><rect x="392" y="415" width="2" height="1" fill="#3a3a3a"/><rect x="406" y="429" width="1" height="2" fill="#1c1c1c"/><rect x="400" y="421" width="1" height="1" fill="#3a3a3a"/><rect x="406" y="436" width="1" height="2" fill="#3a3a3a"/><rect x="403" y="418" width="2" height="1" fill="#444"/><rect x="404" y="430" width="1" height="1" fill="#232323"/><rect x="397" y="415" width="1" height="1" fill="#444"/><rect x="406" y="419" width="1" height="1" fill="#3a3a3a"/><rect x="396" y="436" width="1" height="1" fill="#444"/><rect x="409" y="432" width="1" height="2" fill="#3a3a3a"/><rect x="390" y="438" width="1" height="1" fill="#3a3a3a"/><rect x="393" y="420" width="2" height="1" fill="#444"/><rect x="412" y="425" width="2" height="2" fill="#444"/><rect x="399" y="425" width="1" height="1" fill="#444"/><rect x="395" y="434" width="2" height="1" fill="#3a3a3a"/><rect x="406" y="432" width="1" height="1" fill="#1c1c1c"/><rect x="401" y="417" width="1" height="1" fill="#3a3a3a"/><rect x="398" y="418" width="2" height="2" fill="#232323"/><rect x="390" y="433" width="2" height="1" fill="#1c1c1c"/><rect x="396" y="426" width="1" height="2" fill="#1c1c1c"/><rect x="402" y="423" width="1" height="1" fill="#444"/><rect x="388" y="434" width="2" height="1" fill="#1c1c1c"/><rect x="401" y="418" width="1" height="1" fill="#3a3a3a"/><rect x="406" y="428" width="1" height="1" fill="#232323"/><rect x="393" y="436" width="1" height="1" fill="#1c1c1c"/><rect x="401" y="427" width="2" height="1" fill="#444"/><rect x="410" y="430" width="1" height="1" fill="#3a3a3a"/><rect x="408" y="425" width="1" height="1" fill="#1c1c1c"/><rect x="397" y="438" width="2" height="1" fill="#232323"/><rect x="400" y="425" width="1" height="1" fill="#1c1c1c"/><rect x="398" y="434" width="1" height="1" fill="#444"/><rect x="394" y="434" width="2" height="2" fill="#232323"/><rect x="409" y="426" width="1" height="1" fill="#3a3a3a"/><rect x="397" y="421" width="1" height="1" fill="#1c1c1c"/><rect x="396" y="417" width="1" height="1" fill="#444"/><rect x="395" y="427" width="1" height="1" fill="#444"/><rect x="393" y="425" width="2" height="1" fill="#3a3a3a"/><rect x="398" y="418" width="2" height="2" fill="#1c1c1c"/><rect x="395" y="422" width="1" height="1" fill="#232323"/><rect x="390" y="423" width="2" height="1" fill="#1c1c1c"/><rect x="388" y="435" width="1" height="1" fill="#444"/><rect x="403" y="430" width="1" height="1" fill="#444"/><rect x="390" y="431" width="2" height="1" fill="#3a3a3a"/><rect x="485" y="417" width="1" height="1" fill="#959595"/><rect x="507" y="436" width="1" height="1" fill="#959595"/><rect x="503" y="416" width="2" height="2" fill="#959595"/><rect x="497" y="435" width="1" height="2" fill="#9a9a9a"/><rect x="501" y="429" width="2" height="1" fill="#7a7a7a"/><rect x="484" y="426" width="1" height="1" fill="#7f7f7f"/><rect x="497" y="431" width="1" height="2" fill="#959595"/><rect x="491" y="422" width="1" height="1" fill="#9a9a9a"/><rect x="489" y="419" width="2" height="2" fill="#9a9a9a"/><rect x="500" y="436" width="2" height="1" fill="#7f7f7f"/><rect x="497" y="438" width="2" height="1" fill="#9a9a9a"/><rect x="495" y="429" width="1" height="1" fill="#7f7f7f"/><rect x="504" y="431" width="1" height="1" fill="#9a9a9a"/><rect x="499" y="431" width="2" height="1" fill="#7f7f7f"/><rect x="498" y="426" width="2" height="2" fill="#7f7f7f"/><rect x="499" y="436" width="1" height="1" fill="#959595"/><rect x="503" y="423" width="1" height="1" fill="#9a9a9a"/><rect x="506" y="431" width="2" height="2" fill="#7f7f7f"/><rect x="493" y="438" width="1" height="1" fill="#9a9a9a"/><rect x="505" y="434" width="1" height="1" fill="#7a7a7a"/><rect x="490" y="438" width="1" height="1" fill="#7a7a7a"/><rect x="492" y="433" width="1" height="2" fill="#7a7a7a"/><rect x="508" y="431" width="1" height="1" fill="#959595"/><rect x="490" y="416" width="1" height="2" fill="#7a7a7a"/><rect x="485" y="426" width="1" height="1" fill="#959595"/><rect x="505" y="415" width="1" height="1" fill="#7a7a7a"/><rect x="484" y="416" width="2" height="1" fill="#9a9a9a"/><rect x="492" y="419" width="1" height="2" fill="#959595"/><rect x="500" y="437" width="1" height="1" fill="#7a7a7a"/><rect x="491" y="419" width="1" height="1" fill="#9a9a9a"/><rect x="503" y="435" width="2" height="2" fill="#7a7a7a"/><rect x="493" y="425" width="1" height="1" fill="#9a9a9a"/><rect x="498" y="432" width="2" height="2" fill="#7a7a7a"/><rect x="492" y="439" width="1" height="2" fill="#959595"/><rect x="499" y="422" width="1" height="2" fill="#9a9a9a"/><rect x="487" y="415" width="1" height="1" fill="#7f7f7f"/><rect x="499" y="431" width="1" height="1" fill="#9a9a9a"/><rect x="492" y="423" width="2" height="1" fill="#7a7a7a"/><rect x="506" y="432" width="1" height="2" fill="#7a7a7a"/><rect x="492" y="416" width="1" height="1" fill="#959595"/><rect x="487" y="429" width="2" height="1" fill="#7a7a7a"/><rect x="491" y="422" width="2" height="1" fill="#7a7a7a"/><rect x="492" y="417" width="2" height="1" fill="#9a9a9a"/><rect x="492" y="436" width="1" height="1" fill="#7a7a7a"/><rect x="488" y="416" width="1" height="1" fill="#959595"/><rect x="487" y="431" width="2" height="1" fill="#959595"/><rect x="487" y="418" width="1" height="1" fill="#959595"/><rect x="487" y="421" width="1" height="2" fill="#7f7f7f"/><rect x="498" y="424" width="2" height="2" fill="#7f7f7f"/><rect x="490" y="436" width="1" height="2" fill="#7f7f7f"/><rect x="497" y="431" width="1" height="2" fill="#7a7a7a"/><rect x="497" y="431" width="2" height="1" fill="#7a7a7a"/><rect x="505" y="430" width="1" height="1" fill="#7a7a7a"/><rect x="503" y="426" width="1" height="2" fill="#9a9a9a"/><rect x="493" y="415" width="2" height="1" fill="#7a7a7a"/><rect x="487" y="424" width="1" height="2" fill="#7a7a7a"/><rect x="498" y="416" width="1" height="2" fill="#7f7f7f"/><rect x="498" y="421" width="2" height="2" fill="#7a7a7a"/><rect x="484" y="424" width="1" height="1" fill="#9a9a9a"/><rect x="507" y="417" width="1" height="1" fill="#959595"/><rect x="487" y="433" width="1" height="1" fill="#7f7f7f"/><rect x="488" y="439" width="1" height="1" fill="#7a7a7a"/><rect x="492" y="418" width="1" height="1" fill="#9a9a9a"/><rect x="504" y="427" width="1" height="2" fill="#7a7a7a"/><rect x="484" y="434" width="2" height="1" fill="#7a7a7a"/><rect x="507" y="437" width="1" height="1" fill="#9a9a9a"/><rect x="498" y="419" width="1" height="1" fill="#7f7f7f"/><rect x="500" y="430" width="2" height="2" fill="#7f7f7f"/><rect x="499" y="436" width="1" height="1" fill="#959595"/><rect x="489" y="430" width="2" height="1" fill="#7f7f7f"/><rect x="506" y="436" width="2" height="1" fill="#7a7a7a"/><rect x="486" y="426" width="1" height="2" fill="#959595"/><rect x="497" y="417" width="1" height="2" fill="#7a7a7a"/><rect x="488" y="424" width="1" height="1" fill="#9a9a9a"/><rect x="498" y="420" width="2" height="1" fill="#7a7a7a"/><rect x="488" y="432" width="1" height="1" fill="#9a9a9a"/><rect x="500" y="422" width="2" height="2" fill="#9a9a9a"/><rect x="489" y="420" width="1" height="2" fill="#959595"/><rect x="496" y="426" width="2" height="2" fill="#959595"/><rect x="498" y="429" width="2" height="1" fill="#7f7f7f"/><rect x="507" y="420" width="1" height="2" fill="#7a7a7a"/><rect x="499" y="423" width="1" height="1" fill="#7f7f7f"/><rect x="506" y="435" width="1" height="1" fill="#9a9a9a"/><rect x="506" y="438" width="2" height="1" fill="#959595"/><rect x="501" y="434" width="1" height="1" fill="#7f7f7f"/><rect x="504" y="415" width="1" height="1" fill="#7f7f7f"/><rect x="504" y="420" width="1" height="1" fill="#7f7f7f"/><rect x="490" y="438" width="2" height="2" fill="#7f7f7f"/><rect x="490" y="418" width="1" height="2" fill="#959595"/><rect x="492" y="438" width="2" height="2" fill="#959595"/><rect x="331" y="456" width="1" height="2" fill="#5a5a5a"/><rect x="339" y="451" width="1" height="1" fill="#c4c4c4"/><rect x="336" y="464" width="1" height="1" fill="#7a7a7a"/><rect x="340" y="464" width="1" height="1" fill="#7a7a7a"/><rect x="327" y="455" width="1" height="1" fill="#d0d0d0"/><rect x="332" y="453" width="1" height="1" fill="#d0d0d0"/><rect x="344" y="470" width="1" height="1" fill="#bdbdbd"/><rect x="334" y="468" width="1" height="2" fill="#7a7a7a"/><rect x="329" y="454" width="1" height="1" fill="#c4c4c4"/><rect x="341" y="456" width="1" height="1" fill="#bdbdbd"/><rect x="346" y="456" width="2" height="1" fill="#5a5a5a"/><rect x="337" y="466" width="1" height="1" fill="#5a5a5a"/><rect x="329" y="454" width="1" height="1" fill="#c4c4c4"/><rect x="326" y="448" width="1" height="2" fill="#d0d0d0"/><rect x="340" y="464" width="2" height="1" fill="#d0d0d0"/><rect x="328" y="468" width="1" height="1" fill="#5a5a5a"/><rect x="330" y="467" width="2" height="1" fill="#d0d0d0"/><rect x="329" y="458" width="1" height="2" fill="#bdbdbd"/><rect x="334" y="467" width="2" height="1" fill="#d0d0d0"/><rect x="327" y="448" width="2" height="1" fill="#d0d0d0"/><rect x="348" y="465" width="2" height="1" fill="#c4c4c4"/><rect x="334" y="452" width="1" height="1" fill="#c4c4c4"/><rect x="325" y="458" width="2" height="1" fill="#d0d0d0"/><rect x="347" y="468" width="1" height="1" fill="#d0d0d0"/><rect x="333" y="457" width="1" height="2" fill="#5a5a5a"/><rect x="343" y="468" width="1" height="1" fill="#bdbdbd"/><rect x="330" y="461" width="1" height="1" fill="#d0d0d0"/><rect x="336" y="466" width="1" height="1" fill="#bdbdbd"/><rect x="324" y="458" width="1" height="1" fill="#7a7a7a"/><rect x="335" y="458" width="1" height="2" fill="#c4c4c4"/><rect x="338" y="453" width="1" height="1" fill="#c4c4c4"/><rect x="325" y="448" width="1" height="2" fill="#7a7a7a"/><rect x="343" y="468" width="1" height="2" fill="#c4c4c4"/><rect x="341" y="462" width="2" height="1" fill="#d0d0d0"/><rect x="325" y="450" width="2" height="1" fill="#5a5a5a"/><rect x="344" y="453" width="1" height="1" fill="#7a7a7a"/><rect x="338" y="460" width="1" height="1" fill="#7a7a7a"/><rect x="337" y="461" width="1" height="2" fill="#5a5a5a"/><rect x="330" y="462" width="1" height="1" fill="#c4c4c4"/><rect x="332" y="455" width="1" height="2" fill="#7a7a7a"/><rect x="348" y="454" width="1" height="1" fill="#7a7a7a"/><rect x="334" y="448" width="1" height="2" fill="#c4c4c4"/><rect x="342" y="459" width="2" height="2" fill="#c4c4c4"/><rect x="339" y="459" width="1" height="1" fill="#7a7a7a"/><rect x="342" y="452" width="1" height="1" fill="#5a5a5a"/><rect x="344" y="457" width="1" height="2" fill="#7a7a7a"/><rect x="344" y="468" width="1" height="1" fill="#5a5a5a"/><rect x="339" y="449" width="1" height="2" fill="#7a7a7a"/><rect x="325" y="459" width="2" height="1" fill="#d0d0d0"/><rect x="345" y="448" width="1" height="2" fill="#5a5a5a"/><rect x="342" y="462" width="2" height="1" fill="#5a5a5a"/><rect x="330" y="447" width="1" height="1" fill="#c4c4c4"/><rect x="343" y="455" width="1" height="1" fill="#5a5a5a"/><rect x="331" y="464" width="1" height="1" fill="#7a7a7a"/><rect x="345" y="466" width="1" height="2" fill="#5a5a5a"/><rect x="340" y="461" width="1" height="1" fill="#c4c4c4"/><rect x="346" y="466" width="1" height="1" fill="#bdbdbd"/><rect x="332" y="466" width="1" height="1" fill="#d0d0d0"/><rect x="326" y="471" width="2" height="1" fill="#d0d0d0"/><rect x="335" y="449" width="1" height="2" fill="#5a5a5a"/><rect x="336" y="453" width="1" height="1" fill="#7a7a7a"/><rect x="348" y="462" width="1" height="1" fill="#c4c4c4"/><rect x="327" y="466" width="1" height="2" fill="#5a5a5a"/><rect x="337" y="469" width="1" height="1" fill="#7a7a7a"/><rect x="344" y="456" width="1" height="1" fill="#c4c4c4"/><rect x="341" y="452" width="1" height="1" fill="#7a7a7a"/><rect x="346" y="451" width="1" height="1" fill="#d0d0d0"/><rect x="332" y="464" width="1" height="2" fill="#7a7a7a"/><rect x="324" y="467" width="1" height="1" fill="#bdbdbd"/><rect x="327" y="462" width="2" height="2" fill="#5a5a5a"/><rect x="340" y="449" width="2" height="1" fill="#5a5a5a"/><rect x="333" y="458" width="1" height="1" fill="#c4c4c4"/><rect x="345" y="448" width="2" height="1" fill="#bdbdbd"/><rect x="338" y="465" width="1" height="2" fill="#5a5a5a"/><rect x="343" y="466" width="1" height="1" fill="#7a7a7a"/><rect x="332" y="471" width="2" height="1" fill="#d0d0d0"/><rect x="328" y="460" width="1" height="2" fill="#7a7a7a"/><rect x="345" y="466" width="1" height="1" fill="#d0d0d0"/><rect x="330" y="465" width="1" height="2" fill="#bdbdbd"/><rect x="326" y="449" width="1" height="2" fill="#7a7a7a"/><rect x="334" y="467" width="1" height="1" fill="#7a7a7a"/><rect x="333" y="447" width="2" height="1" fill="#bdbdbd"/><rect x="348" y="449" width="1" height="1" fill="#7a7a7a"/><rect x="329" y="465" width="1" height="2" fill="#bdbdbd"/><rect x="326" y="471" width="1" height="1" fill="#5a5a5a"/><rect x="345" y="470" width="1" height="2" fill="#d0d0d0"/><rect x="346" y="459" width="2" height="1" fill="#5a5a5a"/><rect x="346" y="454" width="1" height="1" fill="#7a7a7a"/><rect x="347" y="457" width="2" height="2" fill="#bdbdbd"/><rect x="338" y="459" width="2" height="1" fill="#d0d0d0"/><rect x="333" y="461" width="1" height="2" fill="#c4c4c4"/><rect x="332" y="452" width="2" height="1" fill="#bdbdbd"/><rect x="343" y="458" width="1" height="1" fill="#bdbdbd"/><rect x="324" y="451" width="2" height="1" fill="#5a5a5a"/><rect x="344" y="458" width="2" height="1" fill="#c4c4c4"/><rect x="348" y="455" width="1" height="1" fill="#5a5a5a"/><rect x="343" y="471" width="1" height="1" fill="#7a7a7a"/><rect x="326" y="456" width="1" height="1" fill="#7a7a7a"/><rect x="336" y="465" width="2" height="2" fill="#bdbdbd"/><rect x="346" y="464" width="1" height="1" fill="#bdbdbd"/><rect x="331" y="452" width="1" height="1" fill="#c4c4c4"/><rect x="334" y="449" width="1" height="1" fill="#c4c4c4"/><rect x="344" y="456" width="2" height="2" fill="#7a7a7a"/><rect x="347" y="451" width="2" height="1" fill="#7a7a7a"/><rect x="346" y="470" width="1" height="2" fill="#d0d0d0"/><rect x="346" y="447" width="2" height="2" fill="#7a7a7a"/><rect x="340" y="460" width="1" height="1" fill="#d0d0d0"/><rect x="339" y="463" width="1" height="1" fill="#7a7a7a"/><rect x="329" y="455" width="2" height="1" fill="#bdbdbd"/><rect x="345" y="456" width="1" height="1" fill="#7a7a7a"/><rect x="336" y="448" width="1" height="1" fill="#d0d0d0"/><rect x="345" y="447" width="1" height="1" fill="#c4c4c4"/><rect x="329" y="450" width="2" height="1" fill="#7a7a7a"/><rect x="331" y="464" width="1" height="1" fill="#bdbdbd"/><rect x="329" y="461" width="2" height="2" fill="#5a5a5a"/><rect x="334" y="452" width="2" height="2" fill="#7a7a7a"/><rect x="327" y="462" width="2" height="1" fill="#d0d0d0"/><rect x="344" y="460" width="2" height="2" fill="#c4c4c4"/><rect x="344" y="453" width="1" height="2" fill="#bdbdbd"/><rect x="333" y="462" width="2" height="1" fill="#c4c4c4"/><rect x="331" y="457" width="1" height="2" fill="#c4c4c4"/><rect x="343" y="457" width="2" height="1" fill="#d0d0d0"/><rect x="326" y="452" width="2" height="1" fill="#5a5a5a"/><rect x="340" y="464" width="2" height="2" fill="#7a7a7a"/><rect x="325" y="453" width="2" height="1" fill="#d0d0d0"/><rect x="343" y="451" width="2" height="1" fill="#c4c4c4"/><rect x="340" y="463" width="1" height="1" fill="#7a7a7a"/><rect x="343" y="455" width="2" height="1" fill="#c4c4c4"/><rect x="324" y="462" width="2" height="1" fill="#7a7a7a"/><rect x="335" y="454" width="2" height="2" fill="#d0d0d0"/><rect x="375" y="455" width="2" height="1" fill="#6a6a6a"/><rect x="379" y="467" width="2" height="1" fill="#545454"/><rect x="380" y="454" width="2" height="1" fill="#676767"/><rect x="359" y="458" width="1" height="1" fill="#545454"/><rect x="373" y="450" width="2" height="1" fill="#676767"/><rect x="379" y="453" width="1" height="1" fill="#676767"/><rect x="380" y="459" width="1" height="1" fill="#676767"/><rect x="375" y="466" width="1" height="1" fill="#676767"/><rect x="356" y="447" width="1" height="1" fill="#676767"/><rect x="361" y="456" width="1" height="1" fill="#6a6a6a"/><rect x="377" y="467" width="1" height="1" fill="#6a6a6a"/><rect x="362" y="459" width="1" height="1" fill="#545454"/><rect x="369" y="452" width="1" height="1" fill="#676767"/><rect x="366" y="456" width="2" height="2" fill="#676767"/><rect x="375" y="468" width="2" height="1" fill="#676767"/><rect x="365" y="458" width="1" height="1" fill="#6a6a6a"/><rect x="366" y="452" width="1" height="1" fill="#6a6a6a"/><rect x="361" y="448" width="1" height="1" fill="#6a6a6a"/><rect x="367" y="459" width="1" height="2" fill="#545454"/><rect x="367" y="459" width="2" height="1" fill="#545454"/><rect x="357" y="469" width="1" height="2" fill="#676767"/><rect x="359" y="471" width="1" height="1" fill="#545454"/><rect x="372" y="458" width="2" height="1" fill="#545454"/><rect x="359" y="465" width="2" height="1" fill="#545454"/><rect x="357" y="460" width="1" height="1" fill="#545454"/><rect x="372" y="466" width="1" height="1" fill="#545454"/><rect x="364" y="469" width="2" height="1" fill="#545454"/><rect x="377" y="457" width="1" height="1" fill="#676767"/><rect x="376" y="451" width="2" height="2" fill="#545454"/><rect x="371" y="452" width="2" height="1" fill="#676767"/><rect x="375" y="464" width="1" height="1" fill="#676767"/><rect x="379" y="466" width="1" height="1" fill="#545454"/><rect x="376" y="460" width="1" height="1" fill="#6a6a6a"/><rect x="357" y="462" width="1" height="1" fill="#676767"/><rect x="379" y="465" width="1" height="2" fill="#545454"/><rect x="359" y="452" width="1" height="1" fill="#676767"/><rect x="357" y="460" width="1" height="1" fill="#545454"/><rect x="375" y="452" width="2" height="1" fill="#545454"/><rect x="378" y="470" width="1" height="1" fill="#545454"/><rect x="365" y="462" width="1" height="1" fill="#676767"/><rect x="368" y="464" width="1" height="2" fill="#545454"/><rect x="366" y="452" width="1" height="1" fill="#545454"/><rect x="372" y="464" width="2" height="1" fill="#676767"/><rect x="380" y="458" width="2" height="2" fill="#6a6a6a"/><rect x="357" y="471" width="1" height="1" fill="#6a6a6a"/><rect x="378" y="468" width="1" height="1" fill="#545454"/><rect x="380" y="469" width="2" height="1" fill="#545454"/><rect x="376" y="452" width="2" height="1" fill="#545454"/><rect x="373" y="471" width="1" height="1" fill="#6a6a6a"/><rect x="364" y="461" width="1" height="2" fill="#6a6a6a"/><rect x="377" y="458" width="1" height="1" fill="#6a6a6a"/><rect x="367" y="470" width="1" height="1" fill="#676767"/><rect x="378" y="461" width="1" height="1" fill="#6a6a6a"/><rect x="360" y="463" width="1" height="1" fill="#545454"/><rect x="371" y="456" width="2" height="1" fill="#6a6a6a"/><rect x="377" y="470" width="1" height="1" fill="#6a6a6a"/><rect x="380" y="465" width="2" height="2" fill="#545454"/><rect x="365" y="466" width="2" height="2" fill="#545454"/><rect x="379" y="447" width="1" height="1" fill="#6a6a6a"/><rect x="370" y="466" width="2" height="1" fill="#676767"/><rect x="380" y="468" width="1" height="2" fill="#6a6a6a"/><rect x="357" y="462" width="1" height="1" fill="#676767"/><rect x="360" y="450" width="1" height="1" fill="#545454"/><rect x="362" y="464" width="1" height="1" fill="#545454"/><rect x="367" y="459" width="2" height="2" fill="#676767"/><rect x="374" y="453" width="1" height="2" fill="#545454"/><rect x="356" y="458" width="1" height="1" fill="#545454"/><rect x="359" y="469" width="2" height="1" fill="#676767"/><rect x="373" y="466" width="1" height="1" fill="#545454"/><rect x="373" y="463" width="1" height="2" fill="#545454"/><rect x="502" y="449" width="1" height="1" fill="#f4f4f4"/><rect x="484" y="451" width="2" height="2" fill="#efefef"/><rect x="508" y="470" width="1" height="1" fill="#f4f4f4"/><rect x="492" y="462" width="1" height="2" fill="#efefef"/><rect x="501" y="464" width="2" height="1" fill="#ffffff"/><rect x="502" y="464" width="2" height="2" fill="#9a9a9a"/><rect x="505" y="466" width="2" height="1" fill="#efefef"/><rect x="494" y="449" width="1" height="1" fill="#9a9a9a"/><rect x="498" y="469" width="1" height="1" fill="#9a9a9a"/><rect x="487" y="448" width="2" height="1" fill="#9a9a9a"/><rect x="499" y="453" width="2" height="2" fill="#ababab"/><rect x="484" y="467" width="1" height="1" fill="#ababab"/><rect x="497" y="456" width="1" height="2" fill="#f4f4f4"/><rect x="486" y="463" width="2" height="2" fill="#ffffff"/><rect x="487" y="466" width="2" height="1" fill="#9a9a9a"/><rect x="507" y="453" width="1" height="1" fill="#ffffff"/><rect x="488" y="466" width="1" height="2" fill="#ababab"/><rect x="484" y="453" width="1" height="1" fill="#9a9a9a"/><rect x="501" y="468" width="2" height="2" fill="#9a9a9a"/><rect x="495" y="459" width="2" height="1" fill="#9a9a9a"/><rect x="488" y="468" width="1" height="1" fill="#ffffff"/><rect x="497" y="466" width="2" height="1" fill="#f4f4f4"/><rect x="498" y="454" width="1" height="2" fill="#efefef"/><rect x="498" y="459" width="1" height="2" fill="#efefef"/><rect x="499" y="456" width="2" height="1" fill="#f4f4f4"/><rect x="490" y="470" width="2" height="1" fill="#efefef"/><rect x="499" y="470" width="1" height="1" fill="#f4f4f4"/><rect x="501" y="450" width="1" height="2" fill="#9a9a9a"/><rect x="490" y="455" width="2" height="1" fill="#9a9a9a"/><rect x="500" y="455" width="1" height="1" fill="#ababab"/><rect x="499" y="455" width="2" height="1" fill="#efefef"/><rect x="499" y="451" width="2" height="1" fill="#efefef"/><rect x="493" y="467" width="1" height="1" fill="#9a9a9a"/><rect x="505" y="452" width="2" height="1" fill="#ababab"/><rect x="492" y="457" width="2" height="1" fill="#efefef"/><rect x="507" y="452" width="1" height="2" fill="#f4f4f4"/><rect x="503" y="461" width="1" height="1" fill="#f4f4f4"/><rect x="503" y="471" width="2" height="1" fill="#9a9a9a"/><rect x="495" y="462" width="2" height="1" fill="#ffffff"/><rect x="488" y="455" width="2" height="1" fill="#efefef"/><rect x="500" y="462" width="1" height="1" fill="#ffffff"/><rect x="487" y="458" width="1" height="1" fill="#ffffff"/><rect x="503" y="457" width="1" height="1" fill="#f4f4f4"/><rect x="506" y="450" width="1" height="2" fill="#efefef"/><rect x="498" y="470" width="1" height="2" fill="#f4f4f4"/><rect x="506" y="464" width="1" height="2" fill="#f4f4f4"/><rect x="489" y="466" width="2" height="1" fill="#efefef"/><rect x="499" y="469" width="1" height="2" fill="#ffffff"/><rect x="490" y="461" width="1" height="1" fill="#efefef"/><rect x="501" y="455" width="1" height="2" fill="#ababab"/><rect x="486" y="456" width="1" height="1" fill="#9a9a9a"/><rect x="485" y="449" width="2" height="1" fill="#9a9a9a"/><rect x="492" y="462" width="1" height="1" fill="#9a9a9a"/><rect x="485" y="469" width="1" height="1" fill="#ababab"/><rect x="504" y="454" width="2" height="2" fill="#f4f4f4"/><rect x="507" y="452" width="1" height="1" fill="#f4f4f4"/><rect x="485" y="470" width="1" height="2" fill="#efefef"/><rect x="494" y="449" width="1" height="2" fill="#f4f4f4"/><rect x="496" y="464" width="1" height="1" fill="#efefef"/><rect x="504" y="449" width="1" height="1" fill="#9a9a9a"/><rect x="500" y="447" width="1" height="2" fill="#ffffff"/><rect x="489" y="456" width="2" height="1" fill="#ababab"/><rect x="502" y="459" width="1" height="1" fill="#ababab"/><rect x="506" y="451" width="1" height="2" fill="#ffffff"/><rect x="508" y="457" width="1" height="2" fill="#ababab"/><rect x="484" y="465" width="1" height="1" fill="#9a9a9a"/><rect x="496" y="463" width="1" height="1" fill="#efefef"/><rect x="500" y="464" width="2" height="1" fill="#ffffff"/><rect x="504" y="464" width="2" height="1" fill="#9a9a9a"/><rect x="505" y="452" width="1" height="1" fill="#ffffff"/><rect x="496" y="449" width="1" height="1" fill="#f4f4f4"/><rect x="499" y="471" width="1" height="1" fill="#ababab"/><rect x="487" y="468" width="1" height="2" fill="#f4f4f4"/><rect x="485" y="464" width="1" height="1" fill="#ffffff"/><rect x="508" y="465" width="2" height="1" fill="#f4f4f4"/><rect x="499" y="449" width="2" height="2" fill="#f4f4f4"/><rect x="489" y="468" width="1" height="1" fill="#f4f4f4"/><rect x="506" y="452" width="1" height="2" fill="#f4f4f4"/><rect x="508" y="468" width="2" height="1" fill="#9a9a9a"/><rect x="492" y="461" width="1" height="1" fill="#ababab"/><rect x="504" y="453" width="1" height="2" fill="#f4f4f4"/><rect x="492" y="463" width="2" height="2" fill="#9a9a9a"/><rect x="508" y="463" width="1" height="2" fill="#ababab"/><rect x="504" y="448" width="1" height="1" fill="#f4f4f4"/><rect x="491" y="471" width="1" height="1" fill="#9a9a9a"/><rect x="497" y="468" width="1" height="1" fill="#ffffff"/><rect x="484" y="447" width="1" height="1" fill="#efefef"/><rect x="484" y="461" width="1" height="1" fill="#ababab"/><rect x="503" y="455" width="1" height="1" fill="#ffffff"/><rect x="497" y="464" width="1" height="1" fill="#efefef"/><rect x="503" y="460" width="2" height="2" fill="#efefef"/><rect x="492" y="455" width="1" height="1" fill="#f4f4f4"/><rect x="490" y="471" width="1" height="1" fill="#ffffff"/><rect x="502" y="450" width="1" height="2" fill="#ffffff"/><rect x="487" y="451" width="2" height="1" fill="#efefef"/><rect x="499" y="463" width="2" height="2" fill="#efefef"/><rect x="490" y="467" width="1" height="1" fill="#efefef"/><rect x="484" y="457" width="1" height="1" fill="#9a9a9a"/><rect x="488" y="456" width="1" height="2" fill="#9a9a9a"/><rect x="491" y="447" width="1" height="1" fill="#f4f4f4"/><rect x="497" y="466" width="2" height="1" fill="#f4f4f4"/><rect x="490" y="459" width="1" height="1" fill="#ffffff"/><rect x="500" y="448" width="2" height="2" fill="#efefef"/><rect x="495" y="457" width="2" height="2" fill="#efefef"/><rect x="492" y="467" width="2" height="1" fill="#9a9a9a"/><rect x="488" y="448" width="1" height="2" fill="#ababab"/><rect x="503" y="470" width="1" height="2" fill="#ababab"/><rect x="487" y="469" width="1" height="1" fill="#f4f4f4"/><rect x="490" y="458" width="1" height="1" fill="#ffffff"/><rect x="489" y="452" width="1" height="2" fill="#ffffff"/><rect x="462" y="419" width="1" height="2" fill="#969696"/><rect x="454" y="432" width="1" height="1" fill="#969696"/><rect x="468" y="421" width="1" height="1" fill="#878787"/><rect x="465" y="417" width="1" height="1" fill="#878787"/><rect x="453" y="433" width="1" height="1" fill="#969696"/><rect x="470" y="433" width="1" height="1" fill="#969696"/><rect x="453" y="432" width="1" height="1" fill="#878787"/><rect x="456" y="432" width="1" height="2" fill="#878787"/><rect x="469" y="436" width="1" height="1" fill="#969696"/><rect x="463" y="418" width="2" height="2" fill="#969696"/><rect x="470" y="416" width="2" height="1" fill="#878787"/><rect x="473" y="432" width="1" height="1" fill="#878787"/><rect x="470" y="429" width="1" height="1" fill="#969696"/><rect x="457" y="437" width="1" height="1" fill="#878787"/><rect x="468" y="430" width="1" height="2" fill="#878787"/><rect x="461" y="434" width="1" height="1" fill="#878787"/><rect x="457" y="439" width="1" height="1" fill="#878787"/><rect x="465" y="416" width="2" height="1" fill="#878787"/><rect x="462" y="437" width="1" height="2" fill="#878787"/><rect x="470" y="429" width="1" height="1" fill="#878787"/><rect x="467" y="437" width="2" height="1" fill="#969696"/><rect x="475" y="437" width="1" height="2" fill="#878787"/><rect x="461" y="437" width="1" height="2" fill="#878787"/><rect x="452" y="429" width="1" height="1" fill="#969696"/><rect x="467" y="416" width="1" height="1" fill="#969696"/><rect x="475" y="422" width="1" height="1" fill="#878787"/><rect x="454" y="420" width="1" height="1" fill="#878787"/><rect x="456" y="428" width="2" height="1" fill="#878787"/><rect x="463" y="436" width="1" height="1" fill="#969696"/><rect x="454" y="420" width="1" height="1" fill="#969696"/><rect x="452" y="430" width="2" height="1" fill="#878787"/><rect x="461" y="415" width="1" height="1" fill="#878787"/><rect x="471" y="433" width="1" height="1" fill="#969696"/><rect x="466" y="439" width="2" height="2" fill="#878787"/><rect x="464" y="427" width="1" height="1" fill="#878787"/><rect x="472" y="427" width="1" height="1" fill="#969696"/><rect x="458" y="429" width="1" height="1" fill="#878787"/><rect x="471" y="416" width="1" height="1" fill="#969696"/><rect x="469" y="418" width="1" height="2" fill="#969696"/><rect x="454" y="421" width="2" height="1" fill="#969696"/><rect x="472" y="423" width="1" height="2" fill="#878787"/><rect x="467" y="418" width="1" height="1" fill="#878787"/><rect x="467" y="430" width="1" height="1" fill="#969696"/><rect x="455" y="438" width="1" height="2" fill="#878787"/><rect x="467" y="437" width="1" height="2" fill="#969696"/><rect x="458" y="431" width="1" height="1" fill="#969696"/><rect x="476" y="431" width="1" height="2" fill="#969696"/><rect x="474" y="423" width="2" height="1" fill="#969696"/><rect x="463" y="439" width="1" height="2" fill="#878787"/><rect x="472" y="422" width="2" height="1" fill="#969696"/><rect x="459" y="458" width="1" height="1" fill="#a6a6a6"/><rect x="474" y="448" width="1" height="1" fill="#a6a6a6"/><rect x="468" y="453" width="1" height="2" fill="#a6a6a6"/><rect x="466" y="462" width="1" height="1" fill="#979797"/><rect x="470" y="453" width="1" height="1" fill="#979797"/><rect x="459" y="471" width="1" height="2" fill="#979797"/><rect x="468" y="460" width="1" height="1" fill="#a6a6a6"/><rect x="473" y="455" width="1" height="1" fill="#979797"/><rect x="471" y="459" width="1" height="2" fill="#a6a6a6"/><rect x="462" y="454" width="2" height="1" fill="#979797"/><rect x="472" y="463" width="1" height="2" fill="#a6a6a6"/><rect x="471" y="449" width="2" height="1" fill="#979797"/><rect x="474" y="453" width="1" height="2" fill="#979797"/><rect x="475" y="465" width="1" height="1" fill="#979797"/><rect x="465" y="451" width="1" height="2" fill="#a6a6a6"/><rect x="469" y="469" width="1" height="2" fill="#979797"/><rect x="472" y="462" width="2" height="2" fill="#a6a6a6"/><rect x="461" y="451" width="1" height="2" fill="#979797"/><rect x="468" y="468" width="1" height="2" fill="#a6a6a6"/><rect x="463" y="454" width="1" height="1" fill="#979797"/><rect x="459" y="455" width="1" height="1" fill="#979797"/><rect x="464" y="456" width="2" height="1" fill="#a6a6a6"/><rect x="473" y="459" width="1" height="1" fill="#a6a6a6"/><rect x="458" y="471" width="1" height="1" fill="#a6a6a6"/><rect x="452" y="471" width="1" height="1" fill="#a6a6a6"/><rect x="470" y="460" width="1" height="1" fill="#979797"/><rect x="470" y="461" width="1" height="1" fill="#a6a6a6"/><rect x="470" y="449" width="1" height="2" fill="#a6a6a6"/><rect x="453" y="449" width="2" height="1" fill="#979797"/><rect x="456" y="463" width="1" height="2" fill="#a6a6a6"/><rect x="471" y="449" width="1" height="1" fill="#a6a6a6"/><rect x="462" y="459" width="2" height="2" fill="#a6a6a6"/><rect x="475" y="456" width="1" height="1" fill="#979797"/><rect x="452" y="467" width="1" height="1" fill="#a6a6a6"/><rect x="471" y="448" width="2" height="1" fill="#a6a6a6"/><rect x="462" y="460" width="1" height="1" fill="#a6a6a6"/><rect x="458" y="466" width="1" height="1" fill="#979797"/><rect x="456" y="459" width="1" height="1" fill="#979797"/><rect x="472" y="451" width="2" height="1" fill="#a6a6a6"/><rect x="474" y="462" width="2" height="1" fill="#979797"/><rect x="434" y="434" width="1" height="1" fill="#dedede"/><rect x="425" y="436" width="1" height="1" fill="#cdcdcd"/><rect x="439" y="417" width="1" height="2" fill="#dedede"/><rect x="443" y="427" width="1" height="2" fill="#cdcdcd"/><rect x="443" y="428" width="1" height="1" fill="#dedede"/><rect x="421" y="418" width="1" height="2" fill="#dedede"/><rect x="444" y="437" width="1" height="2" fill="#dedede"/><rect x="429" y="421" width="2" height="1" fill="#cdcdcd"/><rect x="422" y="439" width="1" height="1" fill="#cdcdcd"/><rect x="428" y="425" width="1" height="1" fill="#dedede"/><rect x="433" y="416" width="1" height="1" fill="#dedede"/><rect x="420" y="422" width="1" height="2" fill="#dedede"/><rect x="439" y="415" width="1" height="2" fill="#dedede"/><rect x="426" y="425" width="1" height="1" fill="#dedede"/><rect x="437" y="415" width="2" height="1" fill="#cdcdcd"/><rect x="437" y="421" width="1" height="1" fill="#cdcdcd"/><rect x="426" y="435" width="1" height="2" fill="#dedede"/><rect x="425" y="434" width="2" height="1" fill="#dedede"/><rect x="428" y="432" width="2" height="2" fill="#dedede"/><rect x="443" y="423" width="2" height="2" fill="#dedede"/><rect x="423" y="437" width="1" height="1" fill="#dedede"/><rect x="439" y="431" width="1" height="2" fill="#cdcdcd"/><rect x="441" y="431" width="2" height="2" fill="#dedede"/><rect x="431" y="418" width="2" height="1" fill="#cdcdcd"/><rect x="426" y="427" width="1" height="2" fill="#dedede"/><rect x="432" y="434" width="1" height="1" fill="#cdcdcd"/><rect x="423" y="421" width="1" height="1" fill="#cdcdcd"/><rect x="430" y="417" width="1" height="2" fill="#cdcdcd"/><rect x="423" y="431" width="1" height="1" fill="#cdcdcd"/><rect x="444" y="432" width="1" height="1" fill="#cdcdcd"/><rect x="442" y="439" width="1" height="2" fill="#dedede"/><rect x="433" y="435" width="1" height="1" fill="#cdcdcd"/><rect x="436" y="426" width="2" height="1" fill="#dedede"/><rect x="441" y="424" width="1" height="2" fill="#cdcdcd"/><rect x="420" y="416" width="1" height="1" fill="#dedede"/><rect x="423" y="434" width="1" height="1" fill="#dedede"/><rect x="421" y="429" width="1" height="1" fill="#cdcdcd"/><rect x="439" y="415" width="1" height="1" fill="#dedede"/><rect x="435" y="432" width="1" height="1" fill="#dedede"/><rect x="443" y="432" width="1" height="2" fill="#dedede"/></svg>
<svg style="left:518px;top:419px" width="9" height="5" viewBox="0 0 9 5"><path d="M0.5 4.5L4.5 0.8l4 3.7" stroke="#7c7c7c" stroke-width="1.1" fill="none"/></svg>
<div class="a" style="left:515px;top:481px;width:12px;height:26px;background:#686868"></div>
<svg style="left:518px;top:526px" width="9" height="5" viewBox="0 0 9 5"><path d="M0.5 0.5L4.5 4.2l4-3.7" stroke="#7c7c7c" stroke-width="1.1" fill="none"/></svg>
<svg style="left:543px;top:416px" width="16" height="11" viewBox="0 0 16 11"><g transform="translate(5 5)"><circle r="3.1" fill="none" stroke="#e4e4e4" stroke-width="2.2"/><g stroke="#e4e4e4" stroke-width="2"><path d="M0 -5.2V-3.4M0 5.2V3.4M-5.2 0H-3.4M5.2 0H3.4M-3.7 -3.7L-2.4 -2.4M3.7 3.7L2.4 2.4M-3.7 3.7L-2.4 2.4M3.7 -3.7L2.4 -2.4"/></g></g><path d="M12 7.5h3.6L13.8 9.6z" fill="#e4e4e4"/></svg>
<svg style="left:558px;top:537px" width="11" height="10" viewBox="0 0 11 10"><path d="M0.5 9.5L10 0.5M4 9.5L10.5 3.5M7.5 9.5L10.5 6.8" stroke="#6a6a6a" stroke-width="1"/></svg>
<div class="a" style="left:375px;top:507px;width:209px;height:15px;background:#ffffe1;border:1px solid #000"></div>
<div class="t" style="left:380px;top:510.500px;font-size:10px;color:#000;letter-spacing:-0.11px">Linen (128 by 128 pixels, Grayscale mode)</div>
<svg style="left:369px;top:487px" width="17" height="20" viewBox="0 0 17 20"><path d="M4.6 1.2c0-0.9 2.4-0.9 2.4 0V7.2h0.6V5.8c0-0.9 2.3-0.9 2.3 0.1V7.4h0.6V6.5c0-0.9 2.2-0.8 2.2 0.2V8h0.5v-0.6c0-0.9 2.2-0.8 2.2 0.3v5.3c0 2.2-1 3.2-1.2 5.5H7.3c-0.5-1.8-2.3-3.4-4.2-5.4-1.2-1.3-2.2-2-2.2-2.8 0-1 1.5-1.2 2.4-0.4l1.3 1.2z" fill="#fcfcfc" stroke="#3a3a3a" stroke-width="0.9"/><path d="M7.6 10v4M9.900 10v4M12.200 10v4" stroke="#9a9a9a" stroke-width="0.700"/></svg>
</body>

</html>
